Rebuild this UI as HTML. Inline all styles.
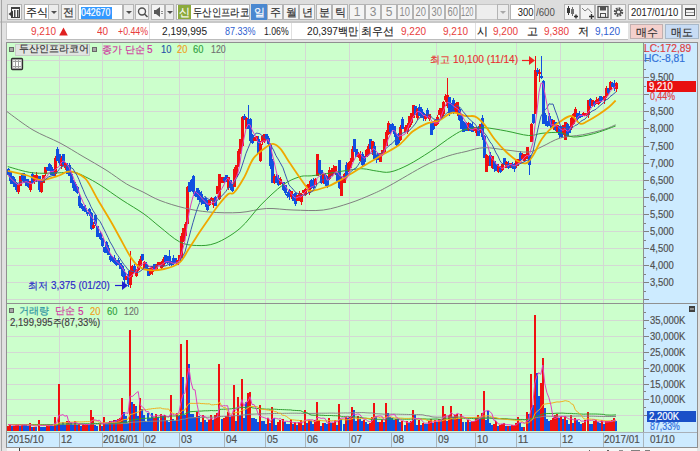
<!DOCTYPE html>
<html><head><meta charset="utf-8">
<style>
*{margin:0;padding:0;box-sizing:border-box}
html,body{width:700px;height:451px;overflow:hidden;background:#e0e0e0;font-family:"Liberation Sans",sans-serif;font-size:11px;color:#202020}
.a{position:absolute}
.btn{position:absolute;top:4px;height:16px;background:#f4f4f4;border:1px solid #b4b4b4;text-align:center;line-height:14px;font-size:11px;color:#303030}
.dd{position:absolute;top:4px;height:16px;background:#ececec;border:1px solid #b4b4b4}
.dis:after{border-top-color:#a8a8a8 !important}
.dd:after{content:"";position:absolute;left:50%;top:6px;margin-left:-3px;border-left:3px solid transparent;border-right:3px solid transparent;border-top:3px solid #505050}
.inp{position:absolute;top:4px;height:16px;background:#fff;border:1px solid #b4b4b4;line-height:14px;font-size:11px}
.num{color:#8c8c8c;font-size:12px;line-height:15px}
.sx{display:inline-block;transform:scaleX(0.91);transform-origin:0 0}
.k{font-size:10.5px;-webkit-text-stroke:0.15px currentColor}
.info{position:absolute;top:23px;height:16px;line-height:16px;font-size:11px;white-space:nowrap}
.r{color:#e83c3c}
.b{color:#3060d0}
.lg{position:absolute;line-height:12px;font-size:11px;white-space:nowrap;-webkit-text-stroke:0.15px currentColor}
.yl{position:absolute;left:650px;height:12px;line-height:12px;font-size:11px;color:#505050;-webkit-text-stroke:0.2px #505050}
.xl{position:absolute;top:432px;height:14px;line-height:14px;font-size:11px;color:#505050;-webkit-text-stroke:0.2px #505050}
.xl span{display:inline-block;transform:scaleX(0.9);transform-origin:0 0}
.xs{position:absolute;top:433px;width:1px;height:14px;background:#a8b4bc}
</style></head><body>
<!-- toolbar -->
<div class="a" style="left:0;top:0;width:700px;height:21px;background:#dddddd"></div>
<div class="a" style="left:0;top:21px;width:700px;height:2px;background:#c8c8c8"></div>
<div class="a" style="left:0;top:23px;width:700px;height:19px;background:#e2e2e2"></div>
<div class="a" style="left:1px;top:0;width:1px;height:451px;background:#a4a4a4"></div>
<div class="btn" style="left:7px;width:15px"><svg width="13" height="14" style="position:absolute;left:0;top:0"><rect x="3.5" y="2.5" width="8" height="10" fill="#fafafa" stroke="#404040"/><rect x="3" y="2" width="9" height="2" fill="#404040"/><rect x="6" y="5" width="1.5" height="7" fill="#484848"/><rect x="9" y="5" width="1.5" height="7" fill="#484848"/><path d="M0.5 9 L5 5.5 L5 12.5 Z" fill="#383838"/></svg></div>
<div class="inp" style="left:24px;width:25px;text-align:center"><span class="k">주식</span></div>
<div class="dd" style="left:48px;width:11px"></div>
<div class="btn" style="left:61px;width:15px"><span class="k">전</span></div>
<div class="inp" style="left:78px;width:45px"><span style="position:absolute;left:2px;top:2px;height:12px;width:31px;background:#3399ff"></span><span class="sx" style="position:absolute;left:2px;top:1px;color:#fff;transform:scaleX(0.8);font-size:11px;line-height:13px;-webkit-text-stroke:0.2px #fff">042670</span></div>
<div class="dd" style="left:123px;width:11px"></div>
<div class="btn" style="left:135px;width:14px"><svg width="13" height="14" style="position:absolute;left:0;top:0"><circle cx="6" cy="6.5" r="3.5" fill="none" stroke="#505050" stroke-width="1.4"/><line x1="8.5" y1="9" x2="11.5" y2="12" stroke="#505050" stroke-width="1.6"/></svg></div>
<div class="btn" style="left:151px;width:14px"><svg width="12" height="14" style="position:absolute;left:0;top:0"><path d="M2 5 L4 5 L8 2 L8 12 L4 9 L2 9 Z" fill="#585858"/><line x1="9" y1="6.5" x2="11" y2="6.5" stroke="#909090"/><line x1="9" y1="8.5" x2="11" y2="8.5" stroke="#909090"/></svg></div>
<div class="dd" style="left:165px;width:9px"></div>
<div class="inp" style="left:176px;width:74px;overflow:hidden"><span style="position:absolute;left:1px;top:0;width:13px;height:14px;background:#8caa3c;color:#fff;text-align:center" class="k">신</span><span class="k" style="position:absolute;left:16px;top:0;white-space:nowrap;font-size:11px;display:inline-block;transform:scaleX(0.85);transform-origin:0 0">두산인프라코</span></div>
<div class="btn" style="left:251px;width:16px;background:#4a88d0;color:#fff;border-color:#4a88d0"><span class="k">일</span></div>
<div class="btn" style="left:267px;width:16px"><span class="k">주</span></div>
<div class="btn" style="left:283px;width:16px"><span class="k">월</span></div>
<div class="btn" style="left:299px;width:16px"><span class="k">년</span></div>
<div class="btn" style="left:316px;width:16px"><span class="k">분</span></div>
<div class="btn" style="left:332px;width:16px"><span class="k">틱</span></div>
<div class="btn num" style="left:349px;width:16px">1</div>
<div class="btn num" style="left:365px;width:16px">3</div>
<div class="btn num" style="left:381px;width:16px">5</div>
<div class="btn num" style="left:397px;width:16px"><span class="sx" style="transform:scaleX(0.78);transform-origin:50% 0">10</span></div>
<div class="btn num" style="left:413px;width:16px"><span class="sx" style="transform:scaleX(0.78);transform-origin:50% 0">20</span></div>
<div class="btn num" style="left:429px;width:16px"><span class="sx" style="transform:scaleX(0.78);transform-origin:50% 0">30</span></div>
<div class="btn num" style="left:445px;width:15px"><span class="sx" style="transform:scaleX(0.78);transform-origin:50% 0">60</span></div>
<div class="btn num" style="left:460px;width:16px;text-align:left;overflow:hidden"><span class="sx" style="transform:scaleX(0.62);margin-left:0px">120</span></div>
<div class="a" style="left:476px;top:4px;width:33px;height:16px;background:#eeeeee;border:1px solid #c4c4c4"></div>
<div class="dd dis" style="left:497px;width:12px;background:#ececec"></div>
<div class="inp" style="left:510px;width:25px;text-align:right"><span class="sx" style="transform:scaleX(0.85);transform-origin:100% 0;margin-right:1px">300</span></div>
<div class="a" style="left:536px;top:4px;line-height:16px;color:#505050"><span class="sx" style="transform:scaleX(0.88)">/600</span></div>
<div class="btn" style="left:564px;width:16px"><svg width="14" height="14" style="position:absolute;left:0;top:0"><rect x="2" y="3" width="3" height="5" fill="#383838"/><line x1="3.5" y1="1" x2="3.5" y2="10" stroke="#383838"/><rect x="6" y="4" width="3" height="5" fill="#707070"/><line x1="7.5" y1="2" x2="7.5" y2="11" stroke="#707070"/><path d="M9 11.5 h4 M11 9.5 v4" stroke="#303030" stroke-width="1.4"/></svg></div>
<div class="btn" style="left:580px;width:15px"><svg width="14" height="14" style="position:absolute;left:0;top:0"><path d="M1 3 L4 6 L7 3.5 L11 8" fill="none" stroke="#808080"/><path d="M8 11.5 h5 M10.5 9 v5" stroke="#303030" stroke-width="1.4"/></svg></div>
<div class="btn" style="left:595px;width:16px"><svg width="14" height="14" style="position:absolute;left:0;top:0"><rect x="2" y="1.5" width="10" height="11" fill="none" stroke="#505050" stroke-width="1.3"/><rect x="4" y="2" width="6" height="3.5" fill="#505050"/><rect x="4.5" y="8.5" width="5" height="4" fill="none" stroke="#505050"/></svg></div>
<div class="btn" style="left:611px;width:15px"><svg width="13" height="14" style="position:absolute;left:0;top:0"><circle cx="6.5" cy="7" r="3.5" fill="none" stroke="#505050" stroke-width="2.4" stroke-dasharray="1.7 1.0"/><circle cx="6.5" cy="7" r="2.2" fill="none" stroke="#505050" stroke-width="1.2"/></svg></div>
<div class="inp" style="left:628px;width:54px;padding-left:2px"><span class="sx" style="transform:scaleX(0.86)">2017/01/10</span></div>
<div class="btn" style="left:682px;width:15px"><svg width="13" height="14" style="position:absolute;left:0;top:0"><rect x="2.5" y="3.5" width="9" height="7" fill="none" stroke="#505050"/><rect x="2" y="3" width="10" height="2" fill="#505050"/><line x1="3" y1="7.5" x2="11" y2="7.5" stroke="#a0a0a0"/></svg></div>

<!-- info bar -->
<div class="a" style="left:6px;top:23px;width:622px;height:17px;background:#fff;border-left:1px solid #c8c8c8;border-bottom:1px solid #bcbcbc"></div>
<div class="a" style="left:149px;top:23px;width:1px;height:16px;background:#e0e0e0"></div>
<div class="a" style="left:291px;top:23px;width:1px;height:16px;background:#e0e0e0"></div>
<div class="a" style="left:359px;top:23px;width:1px;height:16px;background:#e0e0e0"></div>
<div class="a" style="left:475px;top:23px;width:1px;height:16px;background:#e0e0e0"></div>
<div class="info r" style="left:31px"><span class="sx">9,210</span></div>
<svg class="a" style="left:59px;top:27px" width="9" height="9"><path d="M4.5 0.5 L8.8 8.5 L0.2 8.5 Z" fill="#e02020"/></svg>
<div class="info r" style="left:97px"><span class="sx">40</span></div>
<div class="info r" style="left:118px"><span class="sx" style="transform:scaleX(0.8)">+0.44%</span></div>
<div class="info" style="left:162px"><span class="sx" style="transform:scaleX(0.92)">2,199,995</span></div>
<div class="info b" style="left:225px"><span class="sx" style="transform:scaleX(0.82)">87.33%</span></div>
<div class="info" style="left:264px"><span class="sx" style="transform:scaleX(0.79)">1.06%</span></div>
<div class="info" style="left:307px"><span class="sx" style="transform:scaleX(0.92)">20,397<span class="k">백만</span></span></div>
<div class="info" style="left:361px"><span class="k">최우선</span></div>
<div class="info r" style="left:401px"><span class="sx">9,220</span></div>
<div class="info r" style="left:443px"><span class="sx">9,210</span></div>
<div class="info" style="left:477px"><span class="k">시</span></div>
<div class="info r" style="left:493px"><span class="sx">9,200</span></div>
<div class="info" style="left:527px"><span class="k">고</span></div>
<div class="info r" style="left:544px"><span class="sx">9,380</span></div>
<div class="info" style="left:578px"><span class="k">저</span></div>
<div class="info b" style="left:595px"><span class="sx">9,120</span></div>
<div class="a" style="left:630px;top:24px;width:33px;height:15px;background:#f4d0cc;border:1px solid #c0b0b0;text-align:center;line-height:14px;color:#303030"><span class="k">매수</span></div>
<div class="a" style="left:665px;top:24px;width:34px;height:15px;background:#c8dcf4;border:1px solid #a8b8c8;text-align:center;line-height:14px;color:#303030"><span class="k">매도</span></div>

<!-- chart frame -->
<div class="a" style="left:6px;top:42px;width:692px;height:406px;background:#909090"></div>
<div class="a" style="left:7px;top:43px;width:637px;height:389px;background:#ccffcc"></div>
<div class="a" style="left:644px;top:43px;width:53px;height:389px;background:#cdebff"></div>
<div class="a" style="left:7px;top:433px;width:690px;height:14px;background:#cdebff"></div>

<svg class="a" style="left:0;top:0" width="700" height="451" viewBox="0 0 700 451">
<g shape-rendering="crispEdges">
<line x1="59.5" y1="43" x2="59.5" y2="431" stroke="#d4d8d4" stroke-width="1"/>
<line x1="102.5" y1="43" x2="102.5" y2="431" stroke="#d4d8d4" stroke-width="1"/>
<line x1="143.5" y1="43" x2="143.5" y2="431" stroke="#d4d8d4" stroke-width="1"/>
<line x1="179.5" y1="43" x2="179.5" y2="431" stroke="#d4d8d4" stroke-width="1"/>
<line x1="224.5" y1="43" x2="224.5" y2="431" stroke="#d4d8d4" stroke-width="1"/>
<line x1="265.5" y1="43" x2="265.5" y2="431" stroke="#d4d8d4" stroke-width="1"/>
<line x1="305.5" y1="43" x2="305.5" y2="431" stroke="#d4d8d4" stroke-width="1"/>
<line x1="349.5" y1="43" x2="349.5" y2="431" stroke="#d4d8d4" stroke-width="1"/>
<line x1="391.5" y1="43" x2="391.5" y2="431" stroke="#d4d8d4" stroke-width="1"/>
<line x1="436.5" y1="43" x2="436.5" y2="431" stroke="#d4d8d4" stroke-width="1"/>
<line x1="475.5" y1="43" x2="475.5" y2="431" stroke="#d4d8d4" stroke-width="1"/>
<line x1="516.5" y1="43" x2="516.5" y2="431" stroke="#d4d8d4" stroke-width="1"/>
<line x1="560.5" y1="43" x2="560.5" y2="431" stroke="#d4d8d4" stroke-width="1"/>
<line x1="603.5" y1="43" x2="603.5" y2="431" stroke="#d4d8d4" stroke-width="1"/>
<line x1="7" y1="60.5" x2="643" y2="60.5" stroke="#d4d8d4" stroke-width="1"/>
<line x1="7" y1="77.5" x2="643" y2="77.5" stroke="#d4d8d4" stroke-width="1"/>
<line x1="7" y1="94.5" x2="643" y2="94.5" stroke="#d4d8d4" stroke-width="1"/>
<line x1="7" y1="111.5" x2="643" y2="111.5" stroke="#d4d8d4" stroke-width="1"/>
<line x1="7" y1="128.5" x2="643" y2="128.5" stroke="#d4d8d4" stroke-width="1"/>
<line x1="7" y1="146.5" x2="643" y2="146.5" stroke="#d4d8d4" stroke-width="1"/>
<line x1="7" y1="163.5" x2="643" y2="163.5" stroke="#d4d8d4" stroke-width="1"/>
<line x1="7" y1="180.5" x2="643" y2="180.5" stroke="#d4d8d4" stroke-width="1"/>
<line x1="7" y1="197.5" x2="643" y2="197.5" stroke="#d4d8d4" stroke-width="1"/>
<line x1="7" y1="214.5" x2="643" y2="214.5" stroke="#d4d8d4" stroke-width="1"/>
<line x1="7" y1="231.5" x2="643" y2="231.5" stroke="#d4d8d4" stroke-width="1"/>
<line x1="7" y1="248.5" x2="643" y2="248.5" stroke="#d4d8d4" stroke-width="1"/>
<line x1="7" y1="265.5" x2="643" y2="265.5" stroke="#d4d8d4" stroke-width="1"/>
<line x1="7" y1="282.5" x2="643" y2="282.5" stroke="#d4d8d4" stroke-width="1"/>
<line x1="7" y1="299.5" x2="643" y2="299.5" stroke="#d4d8d4" stroke-width="1"/>
<line x1="7" y1="320.5" x2="643" y2="320.5" stroke="#d4d8d4" stroke-width="1"/>
<line x1="7" y1="336.5" x2="643" y2="336.5" stroke="#d4d8d4" stroke-width="1"/>
<line x1="7" y1="352.5" x2="643" y2="352.5" stroke="#d4d8d4" stroke-width="1"/>
<line x1="7" y1="368.5" x2="643" y2="368.5" stroke="#d4d8d4" stroke-width="1"/>
<line x1="7" y1="384.5" x2="643" y2="384.5" stroke="#d4d8d4" stroke-width="1"/>
<line x1="7" y1="399.5" x2="643" y2="399.5" stroke="#d4d8d4" stroke-width="1"/>
<line x1="7" y1="415.5" x2="643" y2="415.5" stroke="#d4d8d4" stroke-width="1"/>
</g>
<g shape-rendering="crispEdges">
<rect x="8" y="168" width="1" height="7" fill="#1050e0"/>
<rect x="7" y="169" width="3" height="6" fill="#1050e0"/>
<rect x="10" y="171" width="1" height="13" fill="#1050e0"/>
<rect x="9" y="172" width="3" height="9" fill="#1050e0"/>
<rect x="12" y="176" width="1" height="8" fill="#1050e0"/>
<rect x="11" y="176" width="3" height="8" fill="#1050e0"/>
<rect x="14" y="177" width="1" height="10" fill="#1050e0"/>
<rect x="13" y="179" width="3" height="8" fill="#1050e0"/>
<rect x="16" y="182" width="1" height="10" fill="#1050e0"/>
<rect x="15" y="183" width="3" height="7" fill="#1050e0"/>
<rect x="18" y="184" width="1" height="10" fill="#f01010"/>
<rect x="17" y="184" width="3" height="8" fill="#f01010"/>
<rect x="20" y="176" width="1" height="10" fill="#f01010"/>
<rect x="19" y="176" width="3" height="10" fill="#f01010"/>
<rect x="22" y="173" width="1" height="8" fill="#1050e0"/>
<rect x="21" y="173" width="3" height="7" fill="#1050e0"/>
<rect x="24" y="173" width="1" height="10" fill="#1050e0"/>
<rect x="23" y="174" width="3" height="9" fill="#1050e0"/>
<rect x="26" y="179" width="1" height="7" fill="#1050e0"/>
<rect x="25" y="179" width="3" height="7" fill="#1050e0"/>
<rect x="28" y="179" width="1" height="9" fill="#1050e0"/>
<rect x="27" y="181" width="3" height="6" fill="#1050e0"/>
<rect x="30" y="181" width="1" height="11" fill="#f01010"/>
<rect x="29" y="181" width="3" height="9" fill="#f01010"/>
<rect x="32" y="172" width="1" height="11" fill="#1050e0"/>
<rect x="31" y="174" width="3" height="9" fill="#1050e0"/>
<rect x="34" y="175" width="1" height="9" fill="#f01010"/>
<rect x="33" y="175" width="3" height="6" fill="#f01010"/>
<rect x="36" y="172" width="1" height="10" fill="#f01010"/>
<rect x="35" y="175" width="3" height="5" fill="#f01010"/>
<rect x="39" y="176" width="1" height="16" fill="#1050e0"/>
<rect x="38" y="176" width="3" height="14" fill="#1050e0"/>
<rect x="41" y="179" width="1" height="14" fill="#f01010"/>
<rect x="40" y="181" width="3" height="11" fill="#f01010"/>
<rect x="43" y="175" width="1" height="8" fill="#f01010"/>
<rect x="42" y="175" width="3" height="8" fill="#f01010"/>
<rect x="45" y="167" width="1" height="9" fill="#f01010"/>
<rect x="44" y="167" width="3" height="7" fill="#f01010"/>
<rect x="47" y="167" width="1" height="4" fill="#1050e0"/>
<rect x="46" y="167" width="3" height="3" fill="#1050e0"/>
<rect x="49" y="163" width="1" height="8" fill="#1050e0"/>
<rect x="48" y="164" width="3" height="7" fill="#1050e0"/>
<rect x="51" y="165" width="1" height="10" fill="#1050e0"/>
<rect x="50" y="167" width="3" height="8" fill="#1050e0"/>
<rect x="53" y="169" width="1" height="7" fill="#1050e0"/>
<rect x="52" y="171" width="3" height="5" fill="#1050e0"/>
<rect x="55" y="156" width="1" height="21" fill="#f01010"/>
<rect x="54" y="158" width="3" height="16" fill="#f01010"/>
<rect x="57" y="147" width="1" height="14" fill="#1050e0"/>
<rect x="56" y="149" width="3" height="12" fill="#1050e0"/>
<rect x="59" y="154" width="1" height="11" fill="#1050e0"/>
<rect x="58" y="154" width="3" height="9" fill="#1050e0"/>
<rect x="61" y="156" width="1" height="13" fill="#f01010"/>
<rect x="60" y="158" width="3" height="8" fill="#f01010"/>
<rect x="63" y="154" width="1" height="12" fill="#1050e0"/>
<rect x="62" y="154" width="3" height="11" fill="#1050e0"/>
<rect x="65" y="163" width="1" height="7" fill="#f01010"/>
<rect x="64" y="163" width="3" height="5" fill="#f01010"/>
<rect x="67" y="163" width="1" height="11" fill="#1050e0"/>
<rect x="66" y="166" width="3" height="8" fill="#1050e0"/>
<rect x="69" y="163" width="1" height="13" fill="#1050e0"/>
<rect x="68" y="165" width="3" height="11" fill="#1050e0"/>
<rect x="71" y="172" width="1" height="11" fill="#1050e0"/>
<rect x="70" y="174" width="3" height="9" fill="#1050e0"/>
<rect x="73" y="180" width="1" height="11" fill="#1050e0"/>
<rect x="72" y="181" width="3" height="7" fill="#1050e0"/>
<rect x="75" y="182" width="1" height="10" fill="#1050e0"/>
<rect x="74" y="184" width="3" height="7" fill="#1050e0"/>
<rect x="77" y="186" width="1" height="8" fill="#1050e0"/>
<rect x="76" y="187" width="3" height="6" fill="#1050e0"/>
<rect x="79" y="194" width="1" height="14" fill="#1050e0"/>
<rect x="78" y="196" width="3" height="10" fill="#1050e0"/>
<rect x="81" y="203" width="1" height="6" fill="#1050e0"/>
<rect x="80" y="204" width="3" height="4" fill="#1050e0"/>
<rect x="83" y="206" width="1" height="5" fill="#1050e0"/>
<rect x="82" y="206" width="3" height="5" fill="#1050e0"/>
<rect x="85" y="205" width="1" height="7" fill="#1050e0"/>
<rect x="84" y="208" width="3" height="4" fill="#1050e0"/>
<rect x="87" y="212" width="1" height="4" fill="#1050e0"/>
<rect x="86" y="212" width="3" height="2" fill="#1050e0"/>
<rect x="89" y="208" width="1" height="8" fill="#1050e0"/>
<rect x="88" y="209" width="3" height="5" fill="#1050e0"/>
<rect x="91" y="212" width="1" height="18" fill="#1050e0"/>
<rect x="90" y="213" width="3" height="16" fill="#1050e0"/>
<rect x="93" y="222" width="1" height="7" fill="#f01010"/>
<rect x="92" y="225" width="3" height="3" fill="#f01010"/>
<rect x="95" y="214" width="1" height="12" fill="#1050e0"/>
<rect x="94" y="215" width="3" height="9" fill="#1050e0"/>
<rect x="97" y="226" width="1" height="11" fill="#1050e0"/>
<rect x="96" y="226" width="3" height="11" fill="#1050e0"/>
<rect x="100" y="231" width="1" height="9" fill="#1050e0"/>
<rect x="99" y="233" width="3" height="6" fill="#1050e0"/>
<rect x="102" y="238" width="1" height="9" fill="#1050e0"/>
<rect x="101" y="238" width="3" height="8" fill="#1050e0"/>
<rect x="104" y="247" width="1" height="6" fill="#1050e0"/>
<rect x="103" y="247" width="3" height="5" fill="#1050e0"/>
<rect x="106" y="241" width="1" height="12" fill="#1050e0"/>
<rect x="105" y="242" width="3" height="11" fill="#1050e0"/>
<rect x="108" y="245" width="1" height="10" fill="#1050e0"/>
<rect x="107" y="248" width="3" height="7" fill="#1050e0"/>
<rect x="110" y="254" width="1" height="8" fill="#1050e0"/>
<rect x="109" y="256" width="3" height="4" fill="#1050e0"/>
<rect x="112" y="256" width="1" height="6" fill="#1050e0"/>
<rect x="111" y="257" width="3" height="4" fill="#1050e0"/>
<rect x="114" y="255" width="1" height="9" fill="#1050e0"/>
<rect x="113" y="258" width="3" height="5" fill="#1050e0"/>
<rect x="116" y="260" width="1" height="6" fill="#1050e0"/>
<rect x="115" y="262" width="3" height="3" fill="#1050e0"/>
<rect x="118" y="258" width="1" height="7" fill="#1050e0"/>
<rect x="117" y="260" width="3" height="4" fill="#1050e0"/>
<rect x="120" y="263" width="1" height="6" fill="#1050e0"/>
<rect x="119" y="263" width="3" height="6" fill="#1050e0"/>
<rect x="122" y="265" width="1" height="12" fill="#1050e0"/>
<rect x="121" y="266" width="3" height="10" fill="#1050e0"/>
<rect x="124" y="269" width="1" height="14" fill="#1050e0"/>
<rect x="123" y="272" width="3" height="8" fill="#1050e0"/>
<rect x="126" y="276" width="1" height="4" fill="#f01010"/>
<rect x="125" y="276" width="3" height="4" fill="#f01010"/>
<rect x="128" y="271" width="1" height="16" fill="#1050e0"/>
<rect x="127" y="274" width="3" height="10" fill="#1050e0"/>
<rect x="130" y="251" width="1" height="37" fill="#f01010"/>
<rect x="129" y="270" width="3" height="15" fill="#f01010"/>
<rect x="132" y="265" width="1" height="12" fill="#f01010"/>
<rect x="131" y="266" width="3" height="8" fill="#f01010"/>
<rect x="134" y="264" width="1" height="8" fill="#1050e0"/>
<rect x="133" y="266" width="3" height="4" fill="#1050e0"/>
<rect x="136" y="269" width="1" height="8" fill="#f01010"/>
<rect x="135" y="270" width="3" height="6" fill="#f01010"/>
<rect x="138" y="261" width="1" height="10" fill="#f01010"/>
<rect x="137" y="264" width="3" height="6" fill="#f01010"/>
<rect x="140" y="256" width="1" height="11" fill="#f01010"/>
<rect x="139" y="259" width="3" height="7" fill="#f01010"/>
<rect x="142" y="254" width="1" height="7" fill="#1050e0"/>
<rect x="141" y="254" width="3" height="6" fill="#1050e0"/>
<rect x="144" y="261" width="1" height="7" fill="#f01010"/>
<rect x="143" y="262" width="3" height="6" fill="#f01010"/>
<rect x="146" y="262" width="1" height="7" fill="#1050e0"/>
<rect x="145" y="264" width="3" height="5" fill="#1050e0"/>
<rect x="148" y="268" width="1" height="8" fill="#1050e0"/>
<rect x="147" y="269" width="3" height="7" fill="#1050e0"/>
<rect x="150" y="268" width="1" height="7" fill="#f01010"/>
<rect x="149" y="268" width="3" height="6" fill="#f01010"/>
<rect x="152" y="266" width="1" height="9" fill="#f01010"/>
<rect x="151" y="266" width="3" height="6" fill="#f01010"/>
<rect x="154" y="264" width="1" height="7" fill="#1050e0"/>
<rect x="153" y="264" width="3" height="6" fill="#1050e0"/>
<rect x="156" y="264" width="1" height="7" fill="#f01010"/>
<rect x="155" y="265" width="3" height="5" fill="#f01010"/>
<rect x="158" y="262" width="1" height="3" fill="#f01010"/>
<rect x="157" y="262" width="3" height="3" fill="#f01010"/>
<rect x="161" y="261" width="1" height="8" fill="#f01010"/>
<rect x="160" y="262" width="3" height="6" fill="#f01010"/>
<rect x="163" y="257" width="1" height="10" fill="#f01010"/>
<rect x="162" y="259" width="3" height="7" fill="#f01010"/>
<rect x="165" y="255" width="1" height="9" fill="#1050e0"/>
<rect x="164" y="255" width="3" height="8" fill="#1050e0"/>
<rect x="167" y="256" width="1" height="8" fill="#1050e0"/>
<rect x="166" y="258" width="3" height="5" fill="#1050e0"/>
<rect x="169" y="250" width="1" height="16" fill="#1050e0"/>
<rect x="168" y="256" width="3" height="7" fill="#1050e0"/>
<rect x="171" y="261" width="1" height="5" fill="#1050e0"/>
<rect x="170" y="262" width="3" height="3" fill="#1050e0"/>
<rect x="173" y="255" width="1" height="10" fill="#1050e0"/>
<rect x="172" y="258" width="3" height="6" fill="#1050e0"/>
<rect x="175" y="258" width="1" height="5" fill="#1050e0"/>
<rect x="174" y="258" width="3" height="5" fill="#1050e0"/>
<rect x="177" y="260" width="1" height="5" fill="#f01010"/>
<rect x="176" y="260" width="3" height="5" fill="#f01010"/>
<rect x="179" y="255" width="1" height="6" fill="#f01010"/>
<rect x="178" y="255" width="3" height="6" fill="#f01010"/>
<rect x="181" y="233" width="1" height="25" fill="#f01010"/>
<rect x="180" y="236" width="3" height="22" fill="#f01010"/>
<rect x="183" y="228" width="1" height="14" fill="#f01010"/>
<rect x="182" y="228" width="3" height="13" fill="#f01010"/>
<rect x="185" y="222" width="1" height="14" fill="#f01010"/>
<rect x="184" y="224" width="3" height="12" fill="#f01010"/>
<rect x="187" y="186" width="1" height="38" fill="#f01010"/>
<rect x="186" y="187" width="3" height="37" fill="#f01010"/>
<rect x="189" y="182" width="1" height="10" fill="#1050e0"/>
<rect x="188" y="182" width="3" height="10" fill="#1050e0"/>
<rect x="191" y="179" width="1" height="12" fill="#1050e0"/>
<rect x="190" y="180" width="3" height="9" fill="#1050e0"/>
<rect x="193" y="175" width="1" height="19" fill="#1050e0"/>
<rect x="192" y="176" width="3" height="16" fill="#1050e0"/>
<rect x="195" y="191" width="1" height="6" fill="#1050e0"/>
<rect x="194" y="193" width="3" height="3" fill="#1050e0"/>
<rect x="197" y="188" width="1" height="12" fill="#1050e0"/>
<rect x="196" y="188" width="3" height="9" fill="#1050e0"/>
<rect x="199" y="190" width="1" height="12" fill="#1050e0"/>
<rect x="198" y="192" width="3" height="8" fill="#1050e0"/>
<rect x="201" y="191" width="1" height="14" fill="#1050e0"/>
<rect x="200" y="194" width="3" height="8" fill="#1050e0"/>
<rect x="203" y="198" width="1" height="6" fill="#1050e0"/>
<rect x="202" y="201" width="3" height="3" fill="#1050e0"/>
<rect x="205" y="197" width="1" height="10" fill="#1050e0"/>
<rect x="204" y="198" width="3" height="6" fill="#1050e0"/>
<rect x="207" y="200" width="1" height="11" fill="#1050e0"/>
<rect x="206" y="202" width="3" height="8" fill="#1050e0"/>
<rect x="209" y="199" width="1" height="7" fill="#f01010"/>
<rect x="208" y="200" width="3" height="5" fill="#f01010"/>
<rect x="211" y="197" width="1" height="4" fill="#f01010"/>
<rect x="210" y="198" width="3" height="3" fill="#f01010"/>
<rect x="213" y="198" width="1" height="10" fill="#f01010"/>
<rect x="212" y="199" width="3" height="6" fill="#f01010"/>
<rect x="215" y="196" width="1" height="10" fill="#1050e0"/>
<rect x="214" y="197" width="3" height="9" fill="#1050e0"/>
<rect x="217" y="186" width="1" height="8" fill="#f01010"/>
<rect x="216" y="186" width="3" height="8" fill="#f01010"/>
<rect x="219" y="174" width="1" height="26" fill="#f01010"/>
<rect x="218" y="174" width="3" height="25" fill="#f01010"/>
<rect x="222" y="177" width="1" height="6" fill="#f01010"/>
<rect x="221" y="177" width="3" height="6" fill="#f01010"/>
<rect x="224" y="177" width="1" height="6" fill="#1050e0"/>
<rect x="223" y="178" width="3" height="3" fill="#1050e0"/>
<rect x="226" y="175" width="1" height="7" fill="#1050e0"/>
<rect x="225" y="175" width="3" height="7" fill="#1050e0"/>
<rect x="228" y="177" width="1" height="13" fill="#f01010"/>
<rect x="227" y="177" width="3" height="11" fill="#f01010"/>
<rect x="230" y="180" width="1" height="10" fill="#1050e0"/>
<rect x="229" y="180" width="3" height="8" fill="#1050e0"/>
<rect x="232" y="184" width="1" height="8" fill="#1050e0"/>
<rect x="231" y="184" width="3" height="7" fill="#1050e0"/>
<rect x="234" y="167" width="1" height="20" fill="#f01010"/>
<rect x="233" y="169" width="3" height="18" fill="#f01010"/>
<rect x="236" y="165" width="1" height="12" fill="#f01010"/>
<rect x="235" y="165" width="3" height="12" fill="#f01010"/>
<rect x="238" y="149" width="1" height="18" fill="#f01010"/>
<rect x="237" y="151" width="3" height="15" fill="#f01010"/>
<rect x="240" y="139" width="1" height="15" fill="#f01010"/>
<rect x="239" y="139" width="3" height="12" fill="#f01010"/>
<rect x="242" y="116" width="1" height="31" fill="#f01010"/>
<rect x="241" y="117" width="3" height="29" fill="#f01010"/>
<rect x="244" y="114" width="1" height="6" fill="#1050e0"/>
<rect x="243" y="116" width="3" height="3" fill="#1050e0"/>
<rect x="246" y="117" width="1" height="12" fill="#f01010"/>
<rect x="245" y="118" width="3" height="11" fill="#f01010"/>
<rect x="248" y="105" width="1" height="24" fill="#1050e0"/>
<rect x="247" y="119" width="3" height="10" fill="#1050e0"/>
<rect x="250" y="118" width="1" height="24" fill="#1050e0"/>
<rect x="249" y="119" width="3" height="22" fill="#1050e0"/>
<rect x="252" y="134" width="1" height="10" fill="#1050e0"/>
<rect x="251" y="135" width="3" height="8" fill="#1050e0"/>
<rect x="254" y="137" width="1" height="4" fill="#f01010"/>
<rect x="253" y="138" width="3" height="3" fill="#f01010"/>
<rect x="256" y="136" width="1" height="5" fill="#f01010"/>
<rect x="255" y="136" width="3" height="5" fill="#f01010"/>
<rect x="258" y="136" width="1" height="18" fill="#1050e0"/>
<rect x="257" y="139" width="3" height="15" fill="#1050e0"/>
<rect x="260" y="141" width="1" height="21" fill="#f01010"/>
<rect x="259" y="144" width="3" height="17" fill="#f01010"/>
<rect x="262" y="135" width="1" height="10" fill="#f01010"/>
<rect x="261" y="136" width="3" height="6" fill="#f01010"/>
<rect x="264" y="134" width="1" height="9" fill="#f01010"/>
<rect x="263" y="134" width="3" height="7" fill="#f01010"/>
<rect x="266" y="134" width="1" height="5" fill="#1050e0"/>
<rect x="265" y="134" width="3" height="5" fill="#1050e0"/>
<rect x="268" y="136" width="1" height="9" fill="#1050e0"/>
<rect x="267" y="138" width="3" height="6" fill="#1050e0"/>
<rect x="270" y="144" width="1" height="25" fill="#1050e0"/>
<rect x="269" y="144" width="3" height="22" fill="#1050e0"/>
<rect x="272" y="159" width="1" height="24" fill="#1050e0"/>
<rect x="271" y="161" width="3" height="22" fill="#1050e0"/>
<rect x="274" y="174" width="1" height="10" fill="#f01010"/>
<rect x="273" y="176" width="3" height="7" fill="#f01010"/>
<rect x="276" y="174" width="1" height="9" fill="#1050e0"/>
<rect x="275" y="177" width="3" height="6" fill="#1050e0"/>
<rect x="278" y="175" width="1" height="11" fill="#1050e0"/>
<rect x="277" y="178" width="3" height="7" fill="#1050e0"/>
<rect x="280" y="177" width="1" height="8" fill="#f01010"/>
<rect x="279" y="179" width="3" height="5" fill="#f01010"/>
<rect x="283" y="182" width="1" height="9" fill="#1050e0"/>
<rect x="282" y="182" width="3" height="8" fill="#1050e0"/>
<rect x="285" y="185" width="1" height="10" fill="#1050e0"/>
<rect x="284" y="185" width="3" height="8" fill="#1050e0"/>
<rect x="287" y="192" width="1" height="6" fill="#1050e0"/>
<rect x="286" y="194" width="3" height="2" fill="#1050e0"/>
<rect x="289" y="189" width="1" height="11" fill="#1050e0"/>
<rect x="288" y="190" width="3" height="7" fill="#1050e0"/>
<rect x="291" y="191" width="1" height="8" fill="#f01010"/>
<rect x="290" y="191" width="3" height="6" fill="#f01010"/>
<rect x="293" y="194" width="1" height="7" fill="#1050e0"/>
<rect x="292" y="194" width="3" height="7" fill="#1050e0"/>
<rect x="295" y="192" width="1" height="14" fill="#1050e0"/>
<rect x="294" y="193" width="3" height="11" fill="#1050e0"/>
<rect x="297" y="195" width="1" height="6" fill="#f01010"/>
<rect x="296" y="195" width="3" height="6" fill="#f01010"/>
<rect x="299" y="191" width="1" height="10" fill="#f01010"/>
<rect x="298" y="193" width="3" height="7" fill="#f01010"/>
<rect x="301" y="193" width="1" height="12" fill="#f01010"/>
<rect x="300" y="194" width="3" height="8" fill="#f01010"/>
<rect x="303" y="190" width="1" height="3" fill="#f01010"/>
<rect x="302" y="190" width="3" height="3" fill="#f01010"/>
<rect x="305" y="188" width="1" height="8" fill="#f01010"/>
<rect x="304" y="189" width="3" height="6" fill="#f01010"/>
<rect x="307" y="184" width="1" height="4" fill="#f01010"/>
<rect x="306" y="185" width="3" height="3" fill="#f01010"/>
<rect x="309" y="181" width="1" height="14" fill="#f01010"/>
<rect x="308" y="184" width="3" height="9" fill="#f01010"/>
<rect x="311" y="179" width="1" height="10" fill="#1050e0"/>
<rect x="310" y="180" width="3" height="8" fill="#1050e0"/>
<rect x="313" y="178" width="1" height="11" fill="#1050e0"/>
<rect x="312" y="181" width="3" height="7" fill="#1050e0"/>
<rect x="315" y="178" width="1" height="7" fill="#f01010"/>
<rect x="314" y="179" width="3" height="6" fill="#f01010"/>
<rect x="317" y="154" width="1" height="22" fill="#f01010"/>
<rect x="316" y="154" width="3" height="22" fill="#f01010"/>
<rect x="319" y="160" width="1" height="14" fill="#1050e0"/>
<rect x="318" y="160" width="3" height="13" fill="#1050e0"/>
<rect x="321" y="170" width="1" height="14" fill="#1050e0"/>
<rect x="320" y="170" width="3" height="13" fill="#1050e0"/>
<rect x="323" y="174" width="1" height="10" fill="#f01010"/>
<rect x="322" y="174" width="3" height="9" fill="#f01010"/>
<rect x="325" y="173" width="1" height="13" fill="#1050e0"/>
<rect x="324" y="175" width="3" height="9" fill="#1050e0"/>
<rect x="327" y="176" width="1" height="12" fill="#1050e0"/>
<rect x="326" y="176" width="3" height="10" fill="#1050e0"/>
<rect x="329" y="167" width="1" height="13" fill="#f01010"/>
<rect x="328" y="170" width="3" height="9" fill="#f01010"/>
<rect x="331" y="168" width="1" height="8" fill="#f01010"/>
<rect x="330" y="171" width="3" height="5" fill="#f01010"/>
<rect x="333" y="165" width="1" height="9" fill="#f01010"/>
<rect x="332" y="168" width="3" height="6" fill="#f01010"/>
<rect x="335" y="166" width="1" height="9" fill="#f01010"/>
<rect x="334" y="166" width="3" height="6" fill="#f01010"/>
<rect x="337" y="173" width="1" height="9" fill="#1050e0"/>
<rect x="336" y="173" width="3" height="8" fill="#1050e0"/>
<rect x="339" y="160" width="1" height="29" fill="#1050e0"/>
<rect x="338" y="160" width="3" height="28" fill="#1050e0"/>
<rect x="341" y="176" width="1" height="20" fill="#f01010"/>
<rect x="340" y="179" width="3" height="17" fill="#f01010"/>
<rect x="344" y="173" width="1" height="10" fill="#f01010"/>
<rect x="343" y="174" width="3" height="9" fill="#f01010"/>
<rect x="346" y="162" width="1" height="16" fill="#1050e0"/>
<rect x="345" y="165" width="3" height="11" fill="#1050e0"/>
<rect x="348" y="162" width="1" height="10" fill="#f01010"/>
<rect x="347" y="163" width="3" height="8" fill="#f01010"/>
<rect x="350" y="158" width="1" height="10" fill="#f01010"/>
<rect x="349" y="161" width="3" height="7" fill="#f01010"/>
<rect x="352" y="146" width="1" height="16" fill="#f01010"/>
<rect x="351" y="149" width="3" height="13" fill="#f01010"/>
<rect x="354" y="139" width="1" height="13" fill="#1050e0"/>
<rect x="353" y="139" width="3" height="13" fill="#1050e0"/>
<rect x="356" y="149" width="1" height="8" fill="#1050e0"/>
<rect x="355" y="149" width="3" height="8" fill="#1050e0"/>
<rect x="358" y="152" width="1" height="6" fill="#f01010"/>
<rect x="357" y="154" width="3" height="3" fill="#f01010"/>
<rect x="360" y="151" width="1" height="10" fill="#f01010"/>
<rect x="359" y="154" width="3" height="7" fill="#f01010"/>
<rect x="362" y="152" width="1" height="15" fill="#1050e0"/>
<rect x="361" y="154" width="3" height="11" fill="#1050e0"/>
<rect x="364" y="156" width="1" height="9" fill="#1050e0"/>
<rect x="363" y="157" width="3" height="5" fill="#1050e0"/>
<rect x="366" y="149" width="1" height="8" fill="#f01010"/>
<rect x="365" y="150" width="3" height="7" fill="#f01010"/>
<rect x="368" y="144" width="1" height="12" fill="#f01010"/>
<rect x="367" y="146" width="3" height="8" fill="#f01010"/>
<rect x="370" y="139" width="1" height="10" fill="#1050e0"/>
<rect x="369" y="139" width="3" height="10" fill="#1050e0"/>
<rect x="372" y="141" width="1" height="14" fill="#f01010"/>
<rect x="371" y="141" width="3" height="11" fill="#f01010"/>
<rect x="374" y="142" width="1" height="17" fill="#1050e0"/>
<rect x="373" y="146" width="3" height="13" fill="#1050e0"/>
<rect x="376" y="155" width="1" height="8" fill="#1050e0"/>
<rect x="375" y="157" width="3" height="3" fill="#1050e0"/>
<rect x="378" y="153" width="1" height="7" fill="#1050e0"/>
<rect x="377" y="153" width="3" height="6" fill="#1050e0"/>
<rect x="380" y="153" width="1" height="9" fill="#f01010"/>
<rect x="379" y="153" width="3" height="9" fill="#f01010"/>
<rect x="382" y="150" width="1" height="6" fill="#f01010"/>
<rect x="381" y="150" width="3" height="5" fill="#f01010"/>
<rect x="384" y="139" width="1" height="14" fill="#f01010"/>
<rect x="383" y="139" width="3" height="13" fill="#f01010"/>
<rect x="386" y="130" width="1" height="16" fill="#f01010"/>
<rect x="385" y="132" width="3" height="14" fill="#f01010"/>
<rect x="388" y="121" width="1" height="14" fill="#f01010"/>
<rect x="387" y="123" width="3" height="11" fill="#f01010"/>
<rect x="390" y="124" width="1" height="10" fill="#1050e0"/>
<rect x="389" y="125" width="3" height="7" fill="#1050e0"/>
<rect x="392" y="123" width="1" height="7" fill="#1050e0"/>
<rect x="391" y="124" width="3" height="6" fill="#1050e0"/>
<rect x="394" y="126" width="1" height="11" fill="#1050e0"/>
<rect x="393" y="126" width="3" height="8" fill="#1050e0"/>
<rect x="396" y="133" width="1" height="13" fill="#1050e0"/>
<rect x="395" y="134" width="3" height="11" fill="#1050e0"/>
<rect x="398" y="133" width="1" height="12" fill="#1050e0"/>
<rect x="397" y="136" width="3" height="7" fill="#1050e0"/>
<rect x="400" y="125" width="1" height="16" fill="#f01010"/>
<rect x="399" y="127" width="3" height="13" fill="#f01010"/>
<rect x="402" y="117" width="1" height="12" fill="#1050e0"/>
<rect x="401" y="119" width="3" height="10" fill="#1050e0"/>
<rect x="405" y="125" width="1" height="7" fill="#f01010"/>
<rect x="404" y="127" width="3" height="5" fill="#f01010"/>
<rect x="407" y="123" width="1" height="11" fill="#f01010"/>
<rect x="406" y="125" width="3" height="7" fill="#f01010"/>
<rect x="409" y="116" width="1" height="12" fill="#f01010"/>
<rect x="408" y="116" width="3" height="11" fill="#f01010"/>
<rect x="411" y="113" width="1" height="12" fill="#f01010"/>
<rect x="410" y="113" width="3" height="10" fill="#f01010"/>
<rect x="413" y="105" width="1" height="13" fill="#f01010"/>
<rect x="412" y="105" width="3" height="13" fill="#f01010"/>
<rect x="415" y="106" width="1" height="9" fill="#1050e0"/>
<rect x="414" y="106" width="3" height="9" fill="#1050e0"/>
<rect x="417" y="108" width="1" height="12" fill="#f01010"/>
<rect x="416" y="109" width="3" height="9" fill="#f01010"/>
<rect x="419" y="104" width="1" height="12" fill="#1050e0"/>
<rect x="418" y="107" width="3" height="9" fill="#1050e0"/>
<rect x="421" y="107" width="1" height="11" fill="#1050e0"/>
<rect x="420" y="109" width="3" height="9" fill="#1050e0"/>
<rect x="423" y="112" width="1" height="9" fill="#1050e0"/>
<rect x="422" y="113" width="3" height="5" fill="#1050e0"/>
<rect x="425" y="114" width="1" height="7" fill="#f01010"/>
<rect x="424" y="116" width="3" height="3" fill="#f01010"/>
<rect x="427" y="108" width="1" height="10" fill="#1050e0"/>
<rect x="426" y="110" width="3" height="7" fill="#1050e0"/>
<rect x="429" y="114" width="1" height="7" fill="#f01010"/>
<rect x="428" y="114" width="3" height="5" fill="#f01010"/>
<rect x="431" y="123" width="1" height="12" fill="#1050e0"/>
<rect x="430" y="123" width="3" height="12" fill="#1050e0"/>
<rect x="433" y="122" width="1" height="8" fill="#1050e0"/>
<rect x="432" y="122" width="3" height="7" fill="#1050e0"/>
<rect x="435" y="120" width="1" height="6" fill="#f01010"/>
<rect x="434" y="120" width="3" height="6" fill="#f01010"/>
<rect x="437" y="115" width="1" height="10" fill="#f01010"/>
<rect x="436" y="117" width="3" height="7" fill="#f01010"/>
<rect x="439" y="108" width="1" height="7" fill="#f01010"/>
<rect x="438" y="110" width="3" height="5" fill="#f01010"/>
<rect x="441" y="108" width="1" height="12" fill="#f01010"/>
<rect x="440" y="108" width="3" height="11" fill="#f01010"/>
<rect x="443" y="101" width="1" height="15" fill="#f01010"/>
<rect x="442" y="102" width="3" height="12" fill="#f01010"/>
<rect x="445" y="94" width="1" height="8" fill="#f01010"/>
<rect x="444" y="96" width="3" height="4" fill="#f01010"/>
<rect x="447" y="78" width="1" height="30" fill="#f01010"/>
<rect x="446" y="95" width="3" height="11" fill="#f01010"/>
<rect x="449" y="97" width="1" height="19" fill="#1050e0"/>
<rect x="448" y="97" width="3" height="16" fill="#1050e0"/>
<rect x="451" y="103" width="1" height="11" fill="#1050e0"/>
<rect x="450" y="104" width="3" height="9" fill="#1050e0"/>
<rect x="453" y="98" width="1" height="16" fill="#1050e0"/>
<rect x="452" y="100" width="3" height="12" fill="#1050e0"/>
<rect x="455" y="103" width="1" height="9" fill="#f01010"/>
<rect x="454" y="104" width="3" height="6" fill="#f01010"/>
<rect x="457" y="102" width="1" height="14" fill="#f01010"/>
<rect x="456" y="102" width="3" height="11" fill="#f01010"/>
<rect x="459" y="107" width="1" height="14" fill="#1050e0"/>
<rect x="458" y="109" width="3" height="11" fill="#1050e0"/>
<rect x="461" y="114" width="1" height="15" fill="#1050e0"/>
<rect x="460" y="116" width="3" height="13" fill="#1050e0"/>
<rect x="463" y="121" width="1" height="11" fill="#1050e0"/>
<rect x="462" y="122" width="3" height="10" fill="#1050e0"/>
<rect x="466" y="122" width="1" height="9" fill="#1050e0"/>
<rect x="465" y="123" width="3" height="8" fill="#1050e0"/>
<rect x="468" y="122" width="1" height="9" fill="#f01010"/>
<rect x="467" y="123" width="3" height="7" fill="#f01010"/>
<rect x="470" y="123" width="1" height="8" fill="#1050e0"/>
<rect x="469" y="124" width="3" height="7" fill="#1050e0"/>
<rect x="472" y="122" width="1" height="10" fill="#1050e0"/>
<rect x="471" y="126" width="3" height="6" fill="#1050e0"/>
<rect x="474" y="127" width="1" height="4" fill="#f01010"/>
<rect x="473" y="128" width="3" height="3" fill="#f01010"/>
<rect x="476" y="127" width="1" height="9" fill="#f01010"/>
<rect x="475" y="127" width="3" height="6" fill="#f01010"/>
<rect x="478" y="126" width="1" height="10" fill="#1050e0"/>
<rect x="477" y="127" width="3" height="9" fill="#1050e0"/>
<rect x="480" y="124" width="1" height="9" fill="#f01010"/>
<rect x="479" y="124" width="3" height="6" fill="#f01010"/>
<rect x="482" y="115" width="1" height="25" fill="#1050e0"/>
<rect x="481" y="118" width="3" height="19" fill="#1050e0"/>
<rect x="484" y="135" width="1" height="23" fill="#1050e0"/>
<rect x="483" y="136" width="3" height="22" fill="#1050e0"/>
<rect x="486" y="154" width="1" height="18" fill="#f01010"/>
<rect x="485" y="155" width="3" height="17" fill="#f01010"/>
<rect x="488" y="156" width="1" height="10" fill="#f01010"/>
<rect x="487" y="156" width="3" height="10" fill="#f01010"/>
<rect x="490" y="152" width="1" height="14" fill="#1050e0"/>
<rect x="489" y="155" width="3" height="11" fill="#1050e0"/>
<rect x="492" y="156" width="1" height="13" fill="#f01010"/>
<rect x="491" y="156" width="3" height="12" fill="#f01010"/>
<rect x="494" y="161" width="1" height="11" fill="#1050e0"/>
<rect x="493" y="161" width="3" height="8" fill="#1050e0"/>
<rect x="496" y="164" width="1" height="7" fill="#1050e0"/>
<rect x="495" y="164" width="3" height="7" fill="#1050e0"/>
<rect x="498" y="164" width="1" height="9" fill="#f01010"/>
<rect x="497" y="166" width="3" height="6" fill="#f01010"/>
<rect x="500" y="166" width="1" height="7" fill="#1050e0"/>
<rect x="499" y="168" width="3" height="4" fill="#1050e0"/>
<rect x="502" y="163" width="1" height="8" fill="#f01010"/>
<rect x="501" y="164" width="3" height="6" fill="#f01010"/>
<rect x="504" y="158" width="1" height="7" fill="#1050e0"/>
<rect x="503" y="158" width="3" height="6" fill="#1050e0"/>
<rect x="506" y="161" width="1" height="7" fill="#f01010"/>
<rect x="505" y="162" width="3" height="6" fill="#f01010"/>
<rect x="508" y="161" width="1" height="8" fill="#1050e0"/>
<rect x="507" y="164" width="3" height="4" fill="#1050e0"/>
<rect x="510" y="163" width="1" height="5" fill="#f01010"/>
<rect x="509" y="163" width="3" height="3" fill="#f01010"/>
<rect x="512" y="162" width="1" height="7" fill="#1050e0"/>
<rect x="511" y="164" width="3" height="4" fill="#1050e0"/>
<rect x="514" y="163" width="1" height="9" fill="#1050e0"/>
<rect x="513" y="164" width="3" height="5" fill="#1050e0"/>
<rect x="516" y="159" width="1" height="9" fill="#f01010"/>
<rect x="515" y="159" width="3" height="7" fill="#f01010"/>
<rect x="518" y="159" width="1" height="7" fill="#f01010"/>
<rect x="517" y="160" width="3" height="4" fill="#f01010"/>
<rect x="520" y="151" width="1" height="10" fill="#1050e0"/>
<rect x="519" y="153" width="3" height="7" fill="#1050e0"/>
<rect x="522" y="153" width="1" height="6" fill="#f01010"/>
<rect x="521" y="155" width="3" height="4" fill="#f01010"/>
<rect x="524" y="154" width="1" height="7" fill="#f01010"/>
<rect x="523" y="154" width="3" height="7" fill="#f01010"/>
<rect x="527" y="147" width="1" height="12" fill="#f01010"/>
<rect x="526" y="147" width="3" height="12" fill="#f01010"/>
<rect x="529" y="154" width="1" height="21" fill="#1050e0"/>
<rect x="528" y="155" width="3" height="10" fill="#1050e0"/>
<rect x="531" y="123" width="1" height="19" fill="#f01010"/>
<rect x="530" y="124" width="3" height="18" fill="#f01010"/>
<rect x="533" y="114" width="1" height="10" fill="#1050e0"/>
<rect x="532" y="114" width="3" height="9" fill="#1050e0"/>
<rect x="535" y="56" width="1" height="58" fill="#f01010"/>
<rect x="534" y="70" width="3" height="44" fill="#f01010"/>
<rect x="537" y="68" width="1" height="8" fill="#1050e0"/>
<rect x="536" y="70" width="3" height="2" fill="#1050e0"/>
<rect x="539" y="69" width="1" height="13" fill="#f01010"/>
<rect x="538" y="72" width="3" height="2" fill="#f01010"/>
<rect x="541" y="56" width="1" height="23" fill="#1050e0"/>
<rect x="540" y="76" width="3" height="2" fill="#1050e0"/>
<rect x="543" y="80" width="1" height="44" fill="#1050e0"/>
<rect x="542" y="81" width="3" height="43" fill="#1050e0"/>
<rect x="545" y="113" width="1" height="13" fill="#1050e0"/>
<rect x="544" y="115" width="3" height="9" fill="#1050e0"/>
<rect x="547" y="121" width="1" height="6" fill="#1050e0"/>
<rect x="546" y="123" width="3" height="3" fill="#1050e0"/>
<rect x="549" y="113" width="1" height="13" fill="#1050e0"/>
<rect x="548" y="116" width="3" height="9" fill="#1050e0"/>
<rect x="551" y="119" width="1" height="10" fill="#1050e0"/>
<rect x="550" y="119" width="3" height="9" fill="#1050e0"/>
<rect x="553" y="120" width="1" height="10" fill="#f01010"/>
<rect x="552" y="120" width="3" height="7" fill="#f01010"/>
<rect x="555" y="122" width="1" height="9" fill="#1050e0"/>
<rect x="554" y="122" width="3" height="8" fill="#1050e0"/>
<rect x="557" y="125" width="1" height="7" fill="#f01010"/>
<rect x="556" y="125" width="3" height="7" fill="#f01010"/>
<rect x="559" y="126" width="1" height="12" fill="#1050e0"/>
<rect x="558" y="126" width="3" height="9" fill="#1050e0"/>
<rect x="561" y="126" width="1" height="12" fill="#1050e0"/>
<rect x="560" y="126" width="3" height="11" fill="#1050e0"/>
<rect x="563" y="125" width="1" height="10" fill="#f01010"/>
<rect x="562" y="125" width="3" height="8" fill="#f01010"/>
<rect x="565" y="122" width="1" height="18" fill="#f01010"/>
<rect x="564" y="122" width="3" height="18" fill="#f01010"/>
<rect x="567" y="123" width="1" height="14" fill="#1050e0"/>
<rect x="566" y="124" width="3" height="13" fill="#1050e0"/>
<rect x="569" y="126" width="1" height="7" fill="#1050e0"/>
<rect x="568" y="127" width="3" height="6" fill="#1050e0"/>
<rect x="571" y="117" width="1" height="13" fill="#f01010"/>
<rect x="570" y="118" width="3" height="10" fill="#f01010"/>
<rect x="573" y="113" width="1" height="12" fill="#f01010"/>
<rect x="572" y="114" width="3" height="10" fill="#f01010"/>
<rect x="575" y="107" width="1" height="10" fill="#f01010"/>
<rect x="574" y="109" width="3" height="8" fill="#f01010"/>
<rect x="577" y="113" width="1" height="8" fill="#1050e0"/>
<rect x="576" y="113" width="3" height="6" fill="#1050e0"/>
<rect x="579" y="111" width="1" height="7" fill="#1050e0"/>
<rect x="578" y="114" width="3" height="4" fill="#1050e0"/>
<rect x="581" y="114" width="1" height="3" fill="#1050e0"/>
<rect x="580" y="114" width="3" height="3" fill="#1050e0"/>
<rect x="583" y="112" width="1" height="4" fill="#f01010"/>
<rect x="582" y="113" width="3" height="3" fill="#f01010"/>
<rect x="585" y="113" width="1" height="3" fill="#f01010"/>
<rect x="584" y="113" width="3" height="3" fill="#f01010"/>
<rect x="588" y="100" width="1" height="18" fill="#f01010"/>
<rect x="587" y="100" width="3" height="15" fill="#f01010"/>
<rect x="590" y="98" width="1" height="10" fill="#1050e0"/>
<rect x="589" y="99" width="3" height="7" fill="#1050e0"/>
<rect x="592" y="100" width="1" height="7" fill="#f01010"/>
<rect x="591" y="100" width="3" height="6" fill="#f01010"/>
<rect x="594" y="101" width="1" height="6" fill="#1050e0"/>
<rect x="593" y="102" width="3" height="3" fill="#1050e0"/>
<rect x="596" y="97" width="1" height="7" fill="#f01010"/>
<rect x="595" y="100" width="3" height="4" fill="#f01010"/>
<rect x="598" y="98" width="1" height="7" fill="#f01010"/>
<rect x="597" y="99" width="3" height="5" fill="#f01010"/>
<rect x="600" y="96" width="1" height="7" fill="#1050e0"/>
<rect x="599" y="96" width="3" height="6" fill="#1050e0"/>
<rect x="602" y="97" width="1" height="3" fill="#1050e0"/>
<rect x="601" y="97" width="3" height="3" fill="#1050e0"/>
<rect x="604" y="96" width="1" height="8" fill="#f01010"/>
<rect x="603" y="96" width="3" height="4" fill="#f01010"/>
<rect x="606" y="86" width="1" height="12" fill="#f01010"/>
<rect x="605" y="88" width="3" height="8" fill="#f01010"/>
<rect x="608" y="88" width="1" height="7" fill="#1050e0"/>
<rect x="607" y="88" width="3" height="5" fill="#1050e0"/>
<rect x="610" y="81" width="1" height="9" fill="#f01010"/>
<rect x="609" y="82" width="3" height="8" fill="#f01010"/>
<rect x="612" y="82" width="1" height="5" fill="#1050e0"/>
<rect x="611" y="83" width="3" height="4" fill="#1050e0"/>
<rect x="614" y="80" width="1" height="11" fill="#1050e0"/>
<rect x="613" y="83" width="3" height="5" fill="#1050e0"/>
<rect x="616" y="82" width="1" height="10" fill="#f01010"/>
<rect x="615" y="83" width="3" height="6" fill="#f01010"/>
</g>
<g>
<path d="M7.0,111.6 C11.3,114.7 24.2,124.8 33.0,130.0 C41.8,135.2 51.7,138.6 60.0,143.0 C68.3,147.4 75.3,152.0 83.0,156.5 C90.7,161.0 98.7,165.4 106.0,170.0 C113.3,174.6 120.4,180.3 126.6,184.0 C132.8,187.7 137.4,189.2 143.0,192.0 C148.6,194.8 153.1,197.8 160.0,200.5 C166.9,203.2 176.3,206.1 184.4,208.0 C192.5,209.9 199.5,211.2 208.8,212.0 C218.1,212.8 230.4,213.1 240.0,212.5 C249.6,211.9 257.7,208.9 266.5,208.5 C275.3,208.1 283.5,209.8 293.0,210.0 C302.5,210.2 313.8,211.2 323.3,210.0 C332.8,208.8 341.9,205.6 350.0,203.0 C358.1,200.4 365.3,197.2 372.0,194.3 C378.7,191.4 381.0,190.3 390.0,185.4 C399.0,180.5 416.3,169.9 426.0,165.0 C435.7,160.1 441.3,158.2 448.0,156.0 C454.7,153.8 460.0,152.9 466.0,151.5 C472.0,150.1 477.5,147.9 484.2,147.7 C490.9,147.4 498.9,149.3 506.3,150.0 C513.7,150.7 522.5,152.6 528.5,152.0 C534.5,151.4 536.7,148.9 542.0,146.6 C547.3,144.3 553.5,140.0 560.2,138.0 C566.9,136.0 574.9,136.2 582.3,134.8 C589.7,133.4 599.0,131.0 604.5,129.3 C610.0,127.6 613.8,125.5 615.6,124.8" fill="none" stroke="#808080" stroke-width="1"/>
<path d="M7.8,166.6 C11.9,167.6 24.0,171.8 32.6,172.8 C41.2,173.8 52.4,172.9 59.2,172.8 C66.0,172.7 69.0,171.3 73.4,172.0 C77.8,172.7 81.4,174.8 85.8,177.0 C90.2,179.2 94.0,181.2 100.0,185.0 C106.0,188.8 114.7,195.2 122.0,200.0 C129.3,204.8 137.7,209.5 144.0,214.0 C150.3,218.5 154.1,222.4 160.0,227.0 C165.9,231.6 173.4,238.7 179.5,241.8 C185.6,244.9 190.5,245.3 196.6,245.5 C202.7,245.7 208.8,245.8 216.0,243.0 C223.2,240.2 232.5,234.7 240.0,228.4 C247.5,222.1 253.7,212.2 260.8,205.0 C267.9,197.8 276.3,189.7 282.8,185.0 C289.3,180.3 294.8,178.3 300.0,176.7 C305.2,175.1 305.7,176.6 314.0,175.5 C322.3,174.4 341.8,171.1 350.0,170.0 C358.2,168.9 358.8,168.6 363.2,168.8 C367.6,169.0 372.0,170.5 376.5,171.0 C381.0,171.5 384.8,173.0 390.0,172.0 C395.2,171.0 401.3,168.4 408.0,165.0 C414.7,161.6 422.9,156.3 430.3,151.5 C437.7,146.7 446.6,139.7 452.5,136.0 C458.4,132.3 460.7,130.7 466.0,129.3 C471.3,127.9 477.5,127.4 484.2,127.7 C490.9,128.0 498.9,129.7 506.3,131.0 C513.7,132.3 522.5,135.1 528.5,135.5 C534.5,135.9 536.7,133.8 542.0,133.3 C547.3,132.8 555.0,132.0 560.2,132.6 C565.5,133.2 568.0,136.8 573.5,137.0 C579.0,137.2 586.4,135.5 593.4,133.7 C600.4,131.9 611.9,127.3 615.6,126.0" fill="none" stroke="#30a030" stroke-width="1"/>
<path d="M7.8,171.0 C9.3,171.3 13.4,172.1 16.6,172.8 C19.9,173.6 23.2,174.3 27.3,175.5 C31.4,176.7 36.2,180.0 41.5,180.0 C46.8,180.0 55.1,176.8 59.2,175.5 C63.3,174.2 63.9,172.6 66.3,172.0 C68.7,171.4 70.2,170.8 73.4,172.0 C76.7,173.2 81.7,174.3 85.8,179.0 C89.9,183.7 94.0,193.2 98.0,200.0 C102.0,206.8 106.3,213.7 110.0,220.0 C113.7,226.3 116.7,232.0 120.0,238.0 C123.3,244.0 127.0,251.3 130.0,256.0 C133.0,260.7 135.0,263.7 138.0,266.0 C141.0,268.3 143.7,269.5 148.0,270.0 C152.3,270.5 158.8,270.2 164.0,269.0 C169.2,267.8 175.3,266.1 179.5,262.6 C183.7,259.1 186.1,252.9 189.3,248.0 C192.6,243.1 195.8,237.9 199.0,233.0 C202.2,228.1 205.6,223.4 208.8,218.7 C212.1,214.0 215.2,209.1 218.5,205.0 C221.8,200.9 225.7,196.1 228.3,194.0 C230.9,191.9 231.4,195.3 234.0,192.6 C236.6,189.9 240.6,183.7 243.8,178.0 C247.1,172.3 249.8,163.5 253.5,158.4 C257.1,153.3 262.4,149.8 265.7,147.4 C268.9,145.0 270.6,143.6 273.0,143.8 C275.4,144.0 277.5,145.4 280.3,148.7 C283.1,151.9 286.7,158.4 290.0,163.3 C293.3,168.2 297.2,173.9 300.0,178.0 C302.8,182.1 305.3,185.5 307.0,187.7 C308.7,189.9 306.6,191.2 310.0,191.0 C313.4,190.8 322.9,188.2 327.7,186.5 C332.5,184.8 335.1,183.0 338.8,181.0 C342.5,179.0 346.3,176.5 350.0,174.3 C353.7,172.1 357.3,169.8 361.0,167.6 C364.7,165.4 368.3,163.2 372.0,161.0 C375.7,158.8 378.6,157.0 383.2,154.3 C387.8,151.6 394.4,148.6 399.3,144.8 C404.2,141.0 408.2,135.0 412.6,131.5 C417.1,128.0 421.6,125.6 426.0,123.8 C430.4,122.0 434.8,122.2 439.2,120.4 C443.6,118.6 448.0,113.4 452.5,112.7 C457.0,112.0 462.2,115.3 466.0,116.0 C469.8,116.7 472.3,115.2 475.3,116.6 C478.3,118.0 480.9,120.5 484.2,124.4 C487.5,128.3 491.6,135.4 495.3,140.0 C499.0,144.6 502.6,148.5 506.3,152.0 C510.0,155.5 514.1,159.1 517.4,161.0 C520.7,162.9 523.7,164.1 526.3,163.2 C528.9,162.3 531.0,158.3 533.0,155.4 C535.0,152.5 536.5,148.8 538.0,146.0 C539.5,143.2 540.2,141.4 542.0,138.8 C543.8,136.2 546.0,133.3 549.0,130.4 C552.0,127.5 556.5,123.9 560.2,121.5 C563.9,119.1 568.0,115.6 571.3,116.0 C574.6,116.4 577.4,122.8 580.0,123.7 C582.6,124.6 583.8,123.0 586.8,121.5 C589.8,120.0 594.2,117.4 597.9,115.0 C601.6,112.6 606.0,109.4 609.0,107.0 C612.0,104.6 614.5,101.6 615.6,100.5" fill="none" stroke="#f0a800" stroke-width="1.8"/>
<polyline points="8.0,174.6 10.0,177.7 12.0,179.6 14.0,181.5 16.0,183.1 18.0,183.3 20.0,182.2 22.0,181.9 24.0,182.0 26.0,182.4 28.0,183.6 30.0,183.6 32.0,183.5 34.0,182.3 36.0,180.8 39.0,181.4 41.0,181.9 43.0,181.4 45.0,179.8 47.0,178.2 49.0,176.6 51.0,176.0 53.0,175.3 55.0,173.6 57.0,172.3 59.0,169.5 61.0,167.2 63.0,166.2 65.0,165.9 67.0,166.2 69.0,166.8 71.0,167.6 73.0,168.8 75.0,172.2 77.0,175.3 79.0,179.7 81.0,184.8 83.0,189.4 85.0,194.3 87.0,198.4 89.0,202.1 91.0,206.8 93.0,210.5 95.0,213.7 97.0,218.1 100.0,221.4 102.0,225.2 104.0,229.2 106.0,233.3 108.0,237.4 110.0,241.9 112.0,245.1 114.0,248.9 116.0,253.0 118.0,255.7 120.0,258.7 122.0,261.7 124.0,264.6 126.0,266.9 128.0,269.8 130.0,270.8 132.0,271.3 134.0,271.9 136.0,272.4 138.0,272.4 140.0,271.4 142.0,269.9 144.0,268.1 146.0,267.4 148.0,266.6 150.0,266.4 152.0,266.4 154.0,266.4 156.0,265.9 158.0,265.7 161.0,266.0 163.0,265.9 165.0,266.0 167.0,265.3 169.0,264.0 171.0,263.6 173.0,263.4 175.0,262.7 177.0,262.2 179.0,261.5 181.0,258.9 183.0,255.8 185.0,251.9 187.0,244.3 189.0,237.2 191.0,229.7 193.0,222.5 195.0,215.8 197.0,209.5 199.0,204.0 201.0,200.6 203.0,198.2 205.0,196.2 207.0,198.5 209.0,199.4 211.0,200.2 213.0,200.9 215.0,202.0 217.0,200.9 219.0,198.3 222.0,195.8 224.0,193.5 226.0,191.3 228.0,188.0 230.0,186.8 232.0,186.0 234.0,183.0 236.0,178.9 238.0,175.4 240.0,171.9 242.0,165.9 244.0,159.7 246.0,153.3 248.0,148.5 250.0,143.8 252.0,139.0 254.0,135.9 256.0,133.1 258.0,133.3 260.0,133.8 262.0,135.7 264.0,137.2 266.0,139.3 268.0,140.8 270.0,143.3 272.0,147.3 274.0,151.1 276.0,155.7 278.0,158.9 280.0,162.4 283.0,167.8 285.0,173.7 287.0,179.4 289.0,184.8 291.0,187.3 293.0,189.1 295.0,191.9 297.0,193.1 299.0,193.9 301.0,195.4 303.0,195.3 305.0,195.0 307.0,193.8 309.0,192.5 311.0,192.1 313.0,190.8 315.0,188.3 317.0,184.3 319.0,182.3 321.0,181.2 323.0,179.7 325.0,179.2 327.0,179.3 329.0,177.9 331.0,176.3 333.0,174.3 335.0,173.1 337.0,175.7 339.0,177.2 341.0,176.8 344.0,176.8 346.0,176.0 348.0,173.6 350.0,172.7 352.0,170.5 354.0,169.0 356.0,168.0 358.0,165.3 360.0,161.9 362.0,160.6 364.0,159.4 366.0,156.7 368.0,155.0 370.0,153.7 372.0,153.0 374.0,153.6 376.0,154.0 378.0,154.5 380.0,154.4 382.0,152.8 384.0,150.5 386.0,148.7 388.0,146.5 390.0,144.8 392.0,143.7 394.0,141.2 396.0,139.6 398.0,138.0 400.0,135.4 402.0,133.3 405.0,132.2 407.0,131.5 409.0,130.7 411.0,128.8 413.0,126.3 415.0,124.4 417.0,120.9 419.0,118.2 421.0,117.3 423.0,116.2 425.0,115.2 427.0,114.3 429.0,114.1 431.0,116.3 433.0,118.8 435.0,119.3 437.0,120.1 439.0,119.5 441.0,118.5 443.0,116.8 445.0,114.8 447.0,112.6 449.0,112.5 451.0,110.3 453.0,108.5 455.0,106.9 457.0,105.3 459.0,106.4 461.0,108.5 463.0,111.5 466.0,114.9 468.0,117.8 470.0,119.6 472.0,121.5 474.0,123.1 476.0,125.4 478.0,128.8 480.0,129.2 482.0,130.0 484.0,132.6 486.0,135.0 488.0,138.4 490.0,141.9 492.0,144.4 494.0,148.5 496.0,152.9 498.0,156.0 500.0,160.8 502.0,163.5 504.0,164.2 506.0,164.8 508.0,165.9 510.0,165.6 512.0,166.7 514.0,166.7 516.0,165.5 518.0,164.8 520.0,163.7 522.0,162.8 524.0,161.8 527.0,160.2 529.0,160.0 531.0,156.0 533.0,151.6 535.0,141.7 537.0,133.1 539.0,124.3 541.0,116.1 543.0,112.9 545.0,109.9 547.0,107.8 549.0,103.8 551.0,104.2 553.0,104.0 555.0,110.0 557.0,115.2 559.0,121.5 561.0,127.4 563.0,127.5 565.0,127.3 567.0,128.4 569.0,129.2 571.0,128.2 573.0,127.5 575.0,125.4 577.0,124.9 579.0,123.2 581.0,121.2 583.0,120.0 585.0,119.1 588.0,115.5 590.0,112.8 592.0,111.1 594.0,110.2 596.0,109.3 598.0,107.3 600.0,105.6 602.0,104.0 604.0,102.3 606.0,99.8 608.0,99.0 610.0,96.6 612.0,95.2 614.0,93.6 616.0,91.8" fill="none" stroke="#3858b0" stroke-width="1" stroke-linejoin="round" />
<polyline points="8.0,174.6 10.0,177.7 12.0,179.6 14.0,181.5 16.0,183.1 18.0,185.0 20.0,183.9 22.0,183.2 24.0,182.4 26.0,181.6 28.0,182.2 30.0,183.3 32.0,183.8 34.0,182.2 36.0,179.9 39.0,180.6 41.0,180.6 43.0,179.0 45.0,177.4 47.0,176.6 49.0,172.7 51.0,171.4 53.0,171.6 55.0,169.8 57.0,168.0 59.0,166.4 61.0,163.0 63.0,160.9 65.0,162.0 67.0,164.4 69.0,167.1 71.0,172.1 73.0,176.7 75.0,182.4 77.0,186.3 79.0,192.3 81.0,197.4 83.0,202.0 85.0,206.2 87.0,210.5 89.0,212.0 91.0,216.1 93.0,218.9 95.0,221.3 97.0,225.8 100.0,230.8 102.0,234.2 104.0,239.5 106.0,245.3 108.0,248.9 110.0,253.1 112.0,256.1 114.0,258.4 116.0,260.8 118.0,262.6 120.0,264.4 122.0,267.4 124.0,270.8 126.0,273.0 128.0,277.0 130.0,277.2 132.0,275.2 134.0,273.1 136.0,271.9 138.0,267.9 140.0,265.7 142.0,264.5 144.0,263.0 146.0,262.8 148.0,265.2 150.0,267.0 152.0,268.2 154.0,269.8 156.0,269.0 158.0,266.2 161.0,265.0 163.0,263.6 165.0,262.1 167.0,261.6 169.0,261.8 171.0,262.3 173.0,263.3 175.0,263.3 177.0,262.7 179.0,261.2 181.0,255.4 183.0,248.3 185.0,240.5 187.0,225.9 189.0,213.3 191.0,204.0 193.0,196.7 195.0,191.2 197.0,193.1 199.0,194.7 201.0,197.2 203.0,199.7 205.0,201.3 207.0,204.0 209.0,204.0 211.0,203.3 213.0,202.2 215.0,202.7 217.0,197.9 219.0,192.6 222.0,188.4 224.0,184.8 226.0,179.9 228.0,178.1 230.0,181.0 232.0,183.7 234.0,181.2 236.0,177.8 238.0,172.6 240.0,162.9 242.0,148.1 244.0,138.2 246.0,128.8 248.0,124.4 250.0,124.8 252.0,129.9 254.0,133.7 256.0,137.4 258.0,142.3 260.0,142.8 262.0,141.5 264.0,140.8 266.0,141.3 268.0,139.3 270.0,143.7 272.0,153.1 274.0,161.4 276.0,170.2 278.0,178.4 280.0,181.1 283.0,182.5 285.0,185.9 287.0,188.6 289.0,191.1 291.0,193.6 293.0,195.8 295.0,198.0 297.0,197.6 299.0,196.6 301.0,197.1 303.0,194.9 305.0,192.0 307.0,190.1 309.0,188.3 311.0,187.1 313.0,186.7 315.0,184.6 317.0,178.5 319.0,176.3 321.0,175.3 323.0,172.7 325.0,173.8 327.0,180.2 329.0,179.6 331.0,177.2 333.0,175.9 335.0,172.3 337.0,171.2 339.0,174.8 341.0,176.3 344.0,177.6 346.0,179.6 348.0,176.1 350.0,170.7 352.0,164.8 354.0,160.3 356.0,156.3 358.0,154.5 360.0,153.1 362.0,156.4 364.0,158.4 366.0,157.1 368.0,155.4 370.0,154.3 372.0,149.5 374.0,148.8 376.0,150.9 378.0,153.5 380.0,154.4 382.0,156.2 384.0,152.2 386.0,146.5 388.0,139.4 390.0,135.1 392.0,131.2 394.0,130.2 396.0,132.7 398.0,136.6 400.0,135.7 402.0,135.5 405.0,134.1 407.0,130.2 409.0,124.9 411.0,122.0 413.0,117.1 415.0,114.7 417.0,111.6 419.0,111.6 421.0,112.7 423.0,115.3 425.0,115.6 427.0,117.1 429.0,116.7 431.0,120.0 433.0,122.2 435.0,123.1 437.0,123.1 439.0,122.3 441.0,117.0 443.0,111.4 445.0,106.6 447.0,102.2 449.0,102.8 451.0,103.7 453.0,105.7 455.0,107.1 457.0,108.4 459.0,110.0 461.0,113.3 463.0,117.3 466.0,122.8 468.0,127.1 470.0,129.2 472.0,129.8 474.0,129.0 476.0,128.1 478.0,130.6 480.0,129.2 482.0,130.2 484.0,136.2 486.0,142.0 488.0,146.2 490.0,154.6 492.0,158.6 494.0,160.7 496.0,163.8 498.0,165.8 500.0,166.9 502.0,168.5 504.0,167.6 506.0,165.8 508.0,166.0 510.0,164.3 512.0,164.9 514.0,165.8 516.0,165.2 518.0,163.7 520.0,163.0 522.0,160.6 524.0,157.7 527.0,155.3 529.0,156.3 531.0,149.1 533.0,142.5 535.0,125.7 537.0,110.9 539.0,92.3 541.0,83.1 543.0,83.3 545.0,94.1 547.0,104.7 549.0,115.3 551.0,125.3 553.0,124.6 555.0,125.9 557.0,125.7 559.0,127.7 561.0,129.5 563.0,130.4 565.0,128.7 567.0,131.1 569.0,130.7 571.0,126.9 573.0,124.6 575.0,122.2 577.0,118.6 579.0,115.8 581.0,115.5 583.0,115.4 585.0,116.1 588.0,112.3 590.0,109.9 592.0,106.6 594.0,104.9 596.0,102.5 598.0,102.2 600.0,101.4 602.0,101.4 604.0,99.6 606.0,97.1 608.0,95.8 610.0,91.8 612.0,89.1 614.0,87.6 616.0,86.5" fill="none" stroke="#e040c0" stroke-width="1" stroke-linejoin="round" />
</g>
<g shape-rendering="crispEdges">
<rect x="7" y="426" width="2" height="5" fill="#f01010"/>
<rect x="9" y="424" width="2" height="7" fill="#f01010"/>
<rect x="11" y="426" width="2" height="5" fill="#1050e0"/>
<rect x="13" y="426" width="2" height="5" fill="#f01010"/>
<rect x="15" y="425" width="2" height="6" fill="#f01010"/>
<rect x="17" y="424" width="2" height="7" fill="#f01010"/>
<rect x="19" y="426" width="2" height="5" fill="#1050e0"/>
<rect x="21" y="424" width="2" height="7" fill="#f01010"/>
<rect x="23" y="425" width="2" height="6" fill="#1050e0"/>
<rect x="25" y="425" width="2" height="6" fill="#1050e0"/>
<rect x="27" y="426" width="2" height="5" fill="#1050e0"/>
<rect x="29" y="423" width="2" height="8" fill="#f01010"/>
<rect x="31" y="427" width="2" height="4" fill="#1050e0"/>
<rect x="33" y="427" width="2" height="4" fill="#f01010"/>
<rect x="35" y="427" width="2" height="4" fill="#1050e0"/>
<rect x="38" y="420" width="2" height="11" fill="#f01010"/>
<rect x="40" y="427" width="2" height="4" fill="#1050e0"/>
<rect x="42" y="427" width="2" height="4" fill="#1050e0"/>
<rect x="44" y="427" width="2" height="4" fill="#1050e0"/>
<rect x="46" y="424" width="2" height="7" fill="#f01010"/>
<rect x="48" y="424" width="2" height="7" fill="#f01010"/>
<rect x="50" y="425" width="2" height="6" fill="#1050e0"/>
<rect x="52" y="426" width="2" height="5" fill="#1050e0"/>
<rect x="54" y="417" width="2" height="14" fill="#f01010"/>
<rect x="56" y="425" width="2" height="6" fill="#1050e0"/>
<rect x="58" y="384" width="2" height="47" fill="#f01010"/>
<rect x="60" y="425" width="2" height="6" fill="#1050e0"/>
<rect x="62" y="422" width="2" height="9" fill="#1050e0"/>
<rect x="64" y="425" width="2" height="6" fill="#1050e0"/>
<rect x="66" y="421" width="2" height="10" fill="#f01010"/>
<rect x="68" y="421" width="2" height="10" fill="#f01010"/>
<rect x="70" y="423" width="2" height="8" fill="#1050e0"/>
<rect x="72" y="425" width="2" height="6" fill="#1050e0"/>
<rect x="74" y="421" width="2" height="10" fill="#f01010"/>
<rect x="76" y="425" width="2" height="6" fill="#1050e0"/>
<rect x="78" y="424" width="2" height="7" fill="#f01010"/>
<rect x="80" y="426" width="2" height="5" fill="#1050e0"/>
<rect x="82" y="424" width="2" height="7" fill="#f01010"/>
<rect x="84" y="424" width="2" height="7" fill="#f01010"/>
<rect x="86" y="424" width="2" height="7" fill="#f01010"/>
<rect x="88" y="425" width="2" height="6" fill="#1050e0"/>
<rect x="90" y="410" width="2" height="21" fill="#f01010"/>
<rect x="92" y="417" width="2" height="14" fill="#f01010"/>
<rect x="94" y="425" width="2" height="6" fill="#1050e0"/>
<rect x="96" y="426" width="2" height="5" fill="#1050e0"/>
<rect x="99" y="424" width="2" height="7" fill="#f01010"/>
<rect x="101" y="426" width="2" height="5" fill="#1050e0"/>
<rect x="103" y="417" width="2" height="14" fill="#f01010"/>
<rect x="105" y="424" width="2" height="7" fill="#1050e0"/>
<rect x="107" y="424" width="2" height="7" fill="#1050e0"/>
<rect x="109" y="421" width="2" height="10" fill="#f01010"/>
<rect x="111" y="421" width="2" height="10" fill="#1050e0"/>
<rect x="113" y="420" width="2" height="11" fill="#f01010"/>
<rect x="115" y="420" width="2" height="11" fill="#1050e0"/>
<rect x="117" y="419" width="2" height="12" fill="#f01010"/>
<rect x="119" y="418" width="2" height="13" fill="#f01010"/>
<rect x="121" y="398" width="2" height="33" fill="#f01010"/>
<rect x="123" y="412" width="2" height="19" fill="#1050e0"/>
<rect x="125" y="416" width="2" height="15" fill="#1050e0"/>
<rect x="127" y="423" width="2" height="8" fill="#1050e0"/>
<rect x="129" y="330" width="2" height="101" fill="#f01010"/>
<rect x="131" y="402" width="2" height="29" fill="#1050e0"/>
<rect x="133" y="404" width="2" height="27" fill="#f01010"/>
<rect x="135" y="406" width="2" height="25" fill="#1050e0"/>
<rect x="137" y="416" width="2" height="15" fill="#1050e0"/>
<rect x="139" y="398" width="2" height="33" fill="#f01010"/>
<rect x="141" y="409" width="2" height="22" fill="#1050e0"/>
<rect x="143" y="415" width="2" height="16" fill="#1050e0"/>
<rect x="145" y="422" width="2" height="9" fill="#1050e0"/>
<rect x="147" y="413" width="2" height="18" fill="#1050e0"/>
<rect x="149" y="418" width="2" height="13" fill="#1050e0"/>
<rect x="151" y="413" width="2" height="18" fill="#1050e0"/>
<rect x="153" y="418" width="2" height="13" fill="#f01010"/>
<rect x="155" y="414" width="2" height="17" fill="#f01010"/>
<rect x="157" y="417" width="2" height="14" fill="#1050e0"/>
<rect x="160" y="414" width="2" height="17" fill="#f01010"/>
<rect x="162" y="416" width="2" height="15" fill="#1050e0"/>
<rect x="164" y="415" width="2" height="16" fill="#f01010"/>
<rect x="166" y="420" width="2" height="11" fill="#1050e0"/>
<rect x="168" y="422" width="2" height="9" fill="#1050e0"/>
<rect x="170" y="395" width="2" height="36" fill="#f01010"/>
<rect x="172" y="419" width="2" height="12" fill="#1050e0"/>
<rect x="174" y="421" width="2" height="10" fill="#1050e0"/>
<rect x="176" y="413" width="2" height="18" fill="#f01010"/>
<rect x="178" y="416" width="2" height="15" fill="#1050e0"/>
<rect x="180" y="344" width="2" height="87" fill="#f01010"/>
<rect x="182" y="377" width="2" height="54" fill="#1050e0"/>
<rect x="184" y="415" width="2" height="16" fill="#1050e0"/>
<rect x="186" y="340" width="2" height="91" fill="#f01010"/>
<rect x="188" y="364" width="2" height="67" fill="#1050e0"/>
<rect x="190" y="414" width="2" height="17" fill="#1050e0"/>
<rect x="192" y="414" width="2" height="17" fill="#1050e0"/>
<rect x="194" y="417" width="2" height="14" fill="#1050e0"/>
<rect x="196" y="412" width="2" height="19" fill="#f01010"/>
<rect x="198" y="416" width="2" height="15" fill="#1050e0"/>
<rect x="200" y="422" width="2" height="9" fill="#1050e0"/>
<rect x="202" y="415" width="2" height="16" fill="#f01010"/>
<rect x="204" y="420" width="2" height="11" fill="#1050e0"/>
<rect x="206" y="422" width="2" height="9" fill="#1050e0"/>
<rect x="208" y="420" width="2" height="11" fill="#f01010"/>
<rect x="210" y="415" width="2" height="16" fill="#f01010"/>
<rect x="212" y="420" width="2" height="11" fill="#1050e0"/>
<rect x="214" y="415" width="2" height="16" fill="#f01010"/>
<rect x="216" y="413" width="2" height="18" fill="#f01010"/>
<rect x="218" y="364" width="2" height="67" fill="#f01010"/>
<rect x="221" y="419" width="2" height="12" fill="#1050e0"/>
<rect x="223" y="418" width="2" height="13" fill="#f01010"/>
<rect x="225" y="416" width="2" height="15" fill="#f01010"/>
<rect x="227" y="412" width="2" height="19" fill="#f01010"/>
<rect x="229" y="417" width="2" height="14" fill="#1050e0"/>
<rect x="231" y="416" width="2" height="15" fill="#f01010"/>
<rect x="233" y="385" width="2" height="46" fill="#f01010"/>
<rect x="235" y="421" width="2" height="10" fill="#1050e0"/>
<rect x="237" y="397" width="2" height="34" fill="#f01010"/>
<rect x="239" y="415" width="2" height="16" fill="#1050e0"/>
<rect x="241" y="379" width="2" height="52" fill="#f01010"/>
<rect x="243" y="418" width="2" height="13" fill="#1050e0"/>
<rect x="245" y="402" width="2" height="29" fill="#1050e0"/>
<rect x="247" y="393" width="2" height="38" fill="#f01010"/>
<rect x="249" y="392" width="2" height="39" fill="#f01010"/>
<rect x="251" y="418" width="2" height="13" fill="#1050e0"/>
<rect x="253" y="418" width="2" height="13" fill="#1050e0"/>
<rect x="255" y="419" width="2" height="12" fill="#1050e0"/>
<rect x="257" y="422" width="2" height="9" fill="#1050e0"/>
<rect x="259" y="405" width="2" height="26" fill="#f01010"/>
<rect x="261" y="421" width="2" height="10" fill="#1050e0"/>
<rect x="263" y="421" width="2" height="10" fill="#1050e0"/>
<rect x="265" y="424" width="2" height="7" fill="#1050e0"/>
<rect x="267" y="418" width="2" height="13" fill="#f01010"/>
<rect x="269" y="423" width="2" height="8" fill="#1050e0"/>
<rect x="271" y="407" width="2" height="24" fill="#f01010"/>
<rect x="273" y="418" width="2" height="13" fill="#1050e0"/>
<rect x="275" y="425" width="2" height="6" fill="#1050e0"/>
<rect x="277" y="422" width="2" height="9" fill="#f01010"/>
<rect x="279" y="420" width="2" height="11" fill="#f01010"/>
<rect x="282" y="419" width="2" height="12" fill="#f01010"/>
<rect x="284" y="422" width="2" height="9" fill="#1050e0"/>
<rect x="286" y="424" width="2" height="7" fill="#1050e0"/>
<rect x="288" y="424" width="2" height="7" fill="#1050e0"/>
<rect x="290" y="419" width="2" height="12" fill="#f01010"/>
<rect x="292" y="424" width="2" height="7" fill="#1050e0"/>
<rect x="294" y="422" width="2" height="9" fill="#f01010"/>
<rect x="296" y="425" width="2" height="6" fill="#1050e0"/>
<rect x="298" y="422" width="2" height="9" fill="#f01010"/>
<rect x="300" y="420" width="2" height="11" fill="#f01010"/>
<rect x="302" y="425" width="2" height="6" fill="#1050e0"/>
<rect x="304" y="410" width="2" height="21" fill="#f01010"/>
<rect x="306" y="423" width="2" height="8" fill="#1050e0"/>
<rect x="308" y="420" width="2" height="11" fill="#f01010"/>
<rect x="310" y="421" width="2" height="10" fill="#1050e0"/>
<rect x="312" y="424" width="2" height="7" fill="#1050e0"/>
<rect x="314" y="420" width="2" height="11" fill="#f01010"/>
<rect x="316" y="402" width="2" height="29" fill="#f01010"/>
<rect x="318" y="420" width="2" height="11" fill="#f01010"/>
<rect x="320" y="426" width="2" height="5" fill="#1050e0"/>
<rect x="322" y="423" width="2" height="8" fill="#f01010"/>
<rect x="324" y="423" width="2" height="8" fill="#1050e0"/>
<rect x="326" y="424" width="2" height="7" fill="#1050e0"/>
<rect x="328" y="418" width="2" height="13" fill="#f01010"/>
<rect x="330" y="423" width="2" height="8" fill="#1050e0"/>
<rect x="332" y="423" width="2" height="8" fill="#f01010"/>
<rect x="334" y="420" width="2" height="11" fill="#f01010"/>
<rect x="336" y="425" width="2" height="6" fill="#1050e0"/>
<rect x="338" y="404" width="2" height="27" fill="#f01010"/>
<rect x="340" y="419" width="2" height="12" fill="#1050e0"/>
<rect x="343" y="424" width="2" height="7" fill="#1050e0"/>
<rect x="345" y="417" width="2" height="14" fill="#f01010"/>
<rect x="347" y="418" width="2" height="13" fill="#1050e0"/>
<rect x="349" y="417" width="2" height="14" fill="#f01010"/>
<rect x="351" y="407" width="2" height="24" fill="#f01010"/>
<rect x="353" y="410" width="2" height="21" fill="#1050e0"/>
<rect x="355" y="421" width="2" height="10" fill="#1050e0"/>
<rect x="357" y="416" width="2" height="15" fill="#f01010"/>
<rect x="359" y="419" width="2" height="12" fill="#1050e0"/>
<rect x="361" y="421" width="2" height="10" fill="#1050e0"/>
<rect x="363" y="420" width="2" height="11" fill="#f01010"/>
<rect x="365" y="422" width="2" height="9" fill="#1050e0"/>
<rect x="367" y="424" width="2" height="7" fill="#1050e0"/>
<rect x="369" y="423" width="2" height="8" fill="#f01010"/>
<rect x="371" y="417" width="2" height="14" fill="#f01010"/>
<rect x="373" y="403" width="2" height="28" fill="#f01010"/>
<rect x="375" y="416" width="2" height="15" fill="#1050e0"/>
<rect x="377" y="422" width="2" height="9" fill="#1050e0"/>
<rect x="379" y="422" width="2" height="9" fill="#f01010"/>
<rect x="381" y="420" width="2" height="11" fill="#f01010"/>
<rect x="383" y="422" width="2" height="9" fill="#1050e0"/>
<rect x="385" y="403" width="2" height="28" fill="#f01010"/>
<rect x="387" y="413" width="2" height="18" fill="#1050e0"/>
<rect x="389" y="417" width="2" height="14" fill="#1050e0"/>
<rect x="391" y="418" width="2" height="13" fill="#1050e0"/>
<rect x="393" y="420" width="2" height="11" fill="#1050e0"/>
<rect x="395" y="419" width="2" height="12" fill="#f01010"/>
<rect x="397" y="419" width="2" height="12" fill="#1050e0"/>
<rect x="399" y="422" width="2" height="9" fill="#1050e0"/>
<rect x="401" y="421" width="2" height="10" fill="#f01010"/>
<rect x="404" y="425" width="2" height="6" fill="#1050e0"/>
<rect x="406" y="421" width="2" height="10" fill="#f01010"/>
<rect x="408" y="423" width="2" height="8" fill="#1050e0"/>
<rect x="410" y="421" width="2" height="10" fill="#f01010"/>
<rect x="412" y="410" width="2" height="21" fill="#f01010"/>
<rect x="414" y="415" width="2" height="16" fill="#1050e0"/>
<rect x="416" y="425" width="2" height="6" fill="#1050e0"/>
<rect x="418" y="420" width="2" height="11" fill="#f01010"/>
<rect x="420" y="425" width="2" height="6" fill="#1050e0"/>
<rect x="422" y="423" width="2" height="8" fill="#f01010"/>
<rect x="424" y="424" width="2" height="7" fill="#1050e0"/>
<rect x="426" y="424" width="2" height="7" fill="#1050e0"/>
<rect x="428" y="421" width="2" height="10" fill="#f01010"/>
<rect x="430" y="419" width="2" height="12" fill="#f01010"/>
<rect x="432" y="423" width="2" height="8" fill="#1050e0"/>
<rect x="434" y="420" width="2" height="11" fill="#f01010"/>
<rect x="436" y="422" width="2" height="9" fill="#1050e0"/>
<rect x="438" y="419" width="2" height="12" fill="#f01010"/>
<rect x="440" y="420" width="2" height="11" fill="#1050e0"/>
<rect x="442" y="406" width="2" height="25" fill="#f01010"/>
<rect x="444" y="414" width="2" height="17" fill="#f01010"/>
<rect x="446" y="421" width="2" height="10" fill="#1050e0"/>
<rect x="448" y="415" width="2" height="16" fill="#f01010"/>
<rect x="450" y="406" width="2" height="25" fill="#f01010"/>
<rect x="452" y="417" width="2" height="14" fill="#1050e0"/>
<rect x="454" y="415" width="2" height="16" fill="#f01010"/>
<rect x="456" y="414" width="2" height="17" fill="#f01010"/>
<rect x="458" y="419" width="2" height="12" fill="#1050e0"/>
<rect x="460" y="414" width="2" height="17" fill="#f01010"/>
<rect x="462" y="422" width="2" height="9" fill="#1050e0"/>
<rect x="465" y="422" width="2" height="9" fill="#1050e0"/>
<rect x="467" y="420" width="2" height="11" fill="#f01010"/>
<rect x="469" y="422" width="2" height="9" fill="#1050e0"/>
<rect x="471" y="421" width="2" height="10" fill="#f01010"/>
<rect x="473" y="421" width="2" height="10" fill="#f01010"/>
<rect x="475" y="418" width="2" height="13" fill="#f01010"/>
<rect x="477" y="415" width="2" height="16" fill="#f01010"/>
<rect x="479" y="417" width="2" height="14" fill="#1050e0"/>
<rect x="481" y="413" width="2" height="18" fill="#f01010"/>
<rect x="483" y="391" width="2" height="40" fill="#f01010"/>
<rect x="485" y="420" width="2" height="11" fill="#1050e0"/>
<rect x="487" y="411" width="2" height="20" fill="#1050e0"/>
<rect x="489" y="423" width="2" height="8" fill="#1050e0"/>
<rect x="491" y="425" width="2" height="6" fill="#1050e0"/>
<rect x="493" y="424" width="2" height="7" fill="#f01010"/>
<rect x="495" y="421" width="2" height="10" fill="#f01010"/>
<rect x="497" y="426" width="2" height="5" fill="#1050e0"/>
<rect x="499" y="425" width="2" height="6" fill="#f01010"/>
<rect x="501" y="424" width="2" height="7" fill="#f01010"/>
<rect x="503" y="423" width="2" height="8" fill="#f01010"/>
<rect x="505" y="426" width="2" height="5" fill="#1050e0"/>
<rect x="507" y="426" width="2" height="5" fill="#f01010"/>
<rect x="509" y="426" width="2" height="5" fill="#1050e0"/>
<rect x="511" y="425" width="2" height="6" fill="#f01010"/>
<rect x="513" y="425" width="2" height="6" fill="#f01010"/>
<rect x="515" y="423" width="2" height="8" fill="#f01010"/>
<rect x="517" y="417" width="2" height="14" fill="#f01010"/>
<rect x="519" y="423" width="2" height="8" fill="#1050e0"/>
<rect x="521" y="427" width="2" height="4" fill="#1050e0"/>
<rect x="523" y="427" width="2" height="4" fill="#f01010"/>
<rect x="526" y="412" width="2" height="19" fill="#f01010"/>
<rect x="528" y="414" width="2" height="17" fill="#1050e0"/>
<rect x="530" y="374" width="2" height="57" fill="#f01010"/>
<rect x="532" y="405" width="2" height="26" fill="#1050e0"/>
<rect x="534" y="315" width="2" height="116" fill="#f01010"/>
<rect x="536" y="373" width="2" height="58" fill="#1050e0"/>
<rect x="538" y="396" width="2" height="35" fill="#1050e0"/>
<rect x="540" y="383" width="2" height="48" fill="#f01010"/>
<rect x="542" y="358" width="2" height="73" fill="#f01010"/>
<rect x="544" y="408" width="2" height="23" fill="#1050e0"/>
<rect x="546" y="419" width="2" height="12" fill="#1050e0"/>
<rect x="548" y="421" width="2" height="10" fill="#1050e0"/>
<rect x="550" y="420" width="2" height="11" fill="#f01010"/>
<rect x="552" y="418" width="2" height="13" fill="#f01010"/>
<rect x="554" y="415" width="2" height="16" fill="#f01010"/>
<rect x="556" y="414" width="2" height="17" fill="#f01010"/>
<rect x="558" y="418" width="2" height="13" fill="#1050e0"/>
<rect x="560" y="416" width="2" height="15" fill="#f01010"/>
<rect x="562" y="419" width="2" height="12" fill="#1050e0"/>
<rect x="564" y="416" width="2" height="15" fill="#f01010"/>
<rect x="566" y="420" width="2" height="11" fill="#1050e0"/>
<rect x="568" y="424" width="2" height="7" fill="#1050e0"/>
<rect x="570" y="415" width="2" height="16" fill="#f01010"/>
<rect x="572" y="423" width="2" height="8" fill="#1050e0"/>
<rect x="574" y="418" width="2" height="13" fill="#f01010"/>
<rect x="576" y="420" width="2" height="11" fill="#1050e0"/>
<rect x="578" y="422" width="2" height="9" fill="#1050e0"/>
<rect x="580" y="424" width="2" height="7" fill="#1050e0"/>
<rect x="582" y="423" width="2" height="8" fill="#f01010"/>
<rect x="584" y="420" width="2" height="11" fill="#f01010"/>
<rect x="587" y="412" width="2" height="19" fill="#f01010"/>
<rect x="589" y="424" width="2" height="7" fill="#1050e0"/>
<rect x="591" y="424" width="2" height="7" fill="#1050e0"/>
<rect x="593" y="421" width="2" height="10" fill="#f01010"/>
<rect x="595" y="420" width="2" height="11" fill="#f01010"/>
<rect x="597" y="422" width="2" height="9" fill="#1050e0"/>
<rect x="599" y="423" width="2" height="8" fill="#1050e0"/>
<rect x="601" y="420" width="2" height="11" fill="#f01010"/>
<rect x="603" y="424" width="2" height="7" fill="#1050e0"/>
<rect x="605" y="421" width="2" height="10" fill="#f01010"/>
<rect x="607" y="421" width="2" height="10" fill="#f01010"/>
<rect x="609" y="421" width="2" height="10" fill="#f01010"/>
<rect x="611" y="420" width="2" height="11" fill="#f01010"/>
<rect x="613" y="418" width="2" height="13" fill="#f01010"/>
<rect x="615" y="421" width="2" height="10" fill="#1050e0"/>
</g>
<g>
<polyline points="8.0,424.5 10.1,424.5 12.1,424.5 14.1,424.5 16.2,424.5 18.2,424.5 20.2,424.5 22.3,424.5 24.3,424.5 26.3,424.5 28.4,424.6 30.4,424.6 32.4,424.6 34.5,424.6 36.5,424.6 38.5,424.6 40.6,424.6 42.6,424.6 44.6,424.6 46.7,424.6 48.7,424.6 50.7,424.6 52.8,424.6 54.8,424.6 56.8,424.6 58.9,424.2 60.9,424.3 62.9,424.2 65.0,424.2 67.0,424.2 69.0,424.2 71.1,424.2 73.1,424.2 75.1,424.2 77.2,424.2 79.2,424.2 81.2,424.2 83.3,424.2 85.3,424.2 87.3,424.2 89.4,424.2 91.4,424.0 93.4,424.0 95.5,424.0 97.5,424.0 99.5,424.0 101.6,424.0 103.6,423.9 105.6,423.9 107.7,423.9 109.7,423.9 111.7,423.9 113.8,423.8 115.8,423.8 117.8,423.7 119.9,423.7 121.9,423.5 123.9,423.4 126.0,423.3 128.0,423.3 130.0,422.5 132.1,422.3 134.1,422.1 136.1,422.0 138.2,421.9 140.2,421.7 142.2,421.6 144.3,421.5 146.3,421.5 148.3,421.4 150.4,421.3 152.4,421.2 154.4,421.2 156.5,421.1 158.5,421.0 160.5,420.9 162.6,420.8 164.6,420.8 166.6,420.7 168.7,420.7 170.7,420.5 172.7,420.4 174.8,420.4 176.8,420.3 178.8,420.2 180.9,419.6 182.9,419.2 184.9,419.1 187.0,418.4 189.0,417.9 191.0,417.8 193.1,417.7 195.1,417.6 197.1,417.5 199.2,417.5 201.2,417.4 203.2,417.3 205.3,417.3 207.3,417.3 209.3,417.2 211.4,417.2 213.4,417.1 215.4,417.1 217.5,417.0 219.5,416.5 221.5,416.4 223.6,416.3 225.6,416.3 227.6,416.2 229.7,416.1 231.7,416.0 233.7,415.7 235.8,415.7 237.8,415.5 239.8,415.4 241.9,415.0 243.9,414.9 245.9,414.8 248.0,414.5 250.0,414.2 252.0,414.2 254.1,414.1 256.1,414.0 258.1,414.0 260.2,413.9 262.2,413.8 264.2,413.8 266.3,413.8 268.3,413.7 270.3,413.7 272.4,413.6 274.4,413.5 276.4,413.5 278.5,413.5 280.5,413.4 282.5,413.4 284.6,413.3 286.6,413.3 288.6,413.3 290.7,413.2 292.7,413.2 294.7,413.2 296.8,413.2 298.8,413.3 300.8,413.2 302.9,413.6 304.9,413.4 306.9,413.4 309.0,413.4 311.0,413.4 313.0,413.4 315.1,413.4 317.1,413.2 319.1,413.2 321.2,413.2 323.2,413.2 325.2,413.2 327.3,413.2 329.3,413.1 331.3,413.1 333.4,413.1 335.4,413.2 337.4,413.2 339.5,413.1 341.5,413.0 343.5,413.0 345.6,412.9 347.6,413.0 349.6,412.9 351.7,412.7 353.7,412.7 355.7,412.6 357.8,412.6 359.8,412.6 361.8,412.6 363.9,412.6 365.9,412.8 367.9,412.9 370.0,413.0 372.0,412.9 374.0,413.5 376.1,413.7 378.1,413.8 380.1,413.9 382.2,414.0 384.2,414.2 386.2,414.1 388.3,414.1 390.3,414.1 392.3,414.1 394.4,414.1 396.4,414.2 398.4,414.2 400.5,414.3 402.5,414.3 404.5,414.4 406.6,414.4 408.6,414.5 410.6,414.5 412.7,414.4 414.7,414.6 416.7,414.6 418.8,414.6 420.8,414.7 422.8,414.8 424.9,415.4 426.9,415.8 428.9,415.9 431.0,416.6 433.0,417.0 435.0,417.1 437.1,417.2 439.1,417.2 441.1,417.2 443.2,417.2 445.2,417.1 447.2,417.1 449.3,417.1 451.3,417.0 453.3,416.9 455.4,416.9 457.4,416.9 459.4,416.9 461.5,416.9 463.5,417.4 465.5,417.5 467.6,417.5 469.6,417.5 471.6,417.6 473.7,417.6 475.7,417.7 477.7,417.9 479.8,417.9 481.8,418.0 483.8,417.8 485.9,418.1 487.9,418.1 489.9,418.3 492.0,418.5 494.0,418.8 496.0,418.8 498.1,418.9 500.1,418.9 502.1,418.9 504.2,419.1 506.2,419.1 508.2,419.2 510.3,419.2 512.3,419.2 514.3,419.3 516.4,419.4 518.4,419.4 520.4,419.4 522.5,419.4 524.5,419.5 526.5,419.4 528.6,419.3 530.6,418.9 532.6,418.8 534.7,417.9 536.7,417.5 538.7,417.3 540.8,416.9 542.8,416.4 544.8,416.3 546.9,416.2 548.9,416.3 550.9,416.3 553.0,416.3 555.0,416.2 557.0,416.1 559.1,416.1 561.1,416.2 563.1,416.2 565.2,416.1 567.2,416.1 569.2,416.1 571.3,416.1 573.3,416.1 575.3,416.1 577.4,416.0 579.4,416.0 581.4,416.0 583.5,416.2 585.5,416.2 587.5,416.1 589.6,416.2 591.6,416.2 593.6,416.2 595.7,416.3 597.7,416.4 599.7,416.5 601.8,416.5 603.8,416.5 605.8,416.5 607.9,416.5 609.9,416.5 611.9,416.5 614.0,416.5 616.0,416.5" fill="none" stroke="#888888" stroke-width="1" stroke-linejoin="round" />
<polyline points="8.0,424.5 10.1,424.5 12.1,424.5 14.1,424.6 16.2,424.6 18.2,424.6 20.2,424.6 22.3,424.6 24.3,424.6 26.3,424.6 28.4,424.6 30.4,424.6 32.4,424.7 34.5,424.7 36.5,424.7 38.5,424.7 40.6,424.7 42.6,424.7 44.6,424.8 46.7,424.8 48.7,424.8 50.7,424.8 52.8,424.8 54.8,424.7 56.8,424.7 58.9,424.0 60.9,424.0 62.9,424.0 65.0,424.0 67.0,423.9 69.0,423.9 71.1,423.8 73.1,423.9 75.1,423.8 77.2,423.8 79.2,423.8 81.2,423.8 83.3,423.8 85.3,423.8 87.3,423.8 89.4,423.8 91.4,423.6 93.4,423.4 95.5,423.4 97.5,423.5 99.5,423.5 101.6,423.5 103.6,423.4 105.6,423.3 107.7,423.3 109.7,423.3 111.7,423.2 113.8,423.1 115.8,423.1 117.8,423.0 119.9,422.9 121.9,422.4 123.9,422.2 126.0,422.1 128.0,422.1 130.0,420.5 132.1,420.1 134.1,419.7 136.1,419.4 138.2,419.2 140.2,418.8 142.2,418.5 144.3,418.4 146.3,418.3 148.3,418.1 150.4,418.0 152.4,417.8 154.4,417.7 156.5,417.4 158.5,417.3 160.5,417.2 162.6,417.0 164.6,416.8 166.6,416.7 168.7,416.6 170.7,416.1 172.7,416.0 174.8,416.0 176.8,415.9 178.8,415.8 180.9,415.1 182.9,414.3 184.9,414.2 187.0,412.8 189.0,411.8 191.0,411.7 193.1,411.5 195.1,411.4 197.1,411.3 199.2,411.1 201.2,411.1 203.2,410.9 205.3,410.8 207.3,410.8 209.3,410.7 211.4,410.5 213.4,410.7 215.4,410.7 217.5,410.5 219.5,409.4 221.5,409.3 223.6,409.2 225.6,409.2 227.6,409.0 229.7,408.9 231.7,408.8 233.7,408.2 235.8,408.2 237.8,407.8 239.8,407.8 241.9,407.1 243.9,407.5 245.9,407.3 248.0,406.9 250.0,406.4 252.0,407.8 254.1,408.1 256.1,408.4 258.1,408.6 260.2,408.5 262.2,408.8 264.2,409.0 266.3,409.2 268.3,409.1 270.3,409.3 272.4,409.1 274.4,409.2 276.4,409.3 278.5,409.5 280.5,409.5 282.5,409.6 284.6,409.7 286.6,409.8 288.6,409.9 290.7,409.9 292.7,410.3 294.7,410.4 296.8,410.5 298.8,410.6 300.8,410.7 302.9,412.0 304.9,412.6 306.9,412.7 309.0,414.0 311.0,415.0 313.0,415.2 315.1,415.3 317.1,415.0 319.1,415.1 321.2,415.3 323.2,415.3 325.2,415.5 327.3,415.5 329.3,415.5 331.3,415.5 333.4,415.7 335.4,415.7 337.4,415.8 339.5,415.7 341.5,416.6 343.5,416.7 345.6,416.7 347.6,416.7 349.6,416.8 351.7,416.6 353.7,416.5 355.7,417.1 357.8,417.0 359.8,417.4 361.8,417.5 363.9,418.1 365.9,418.2 367.9,418.6 370.0,419.1 372.0,419.5 374.0,419.2 376.1,419.2 378.1,419.3 380.1,419.3 382.2,419.5 384.2,419.5 386.2,419.2 388.3,419.0 390.3,419.0 392.3,418.9 394.4,419.1 396.4,419.1 398.4,419.1 400.5,419.1 402.5,419.1 404.5,419.2 406.6,419.2 408.6,419.2 410.6,419.1 412.7,419.0 414.7,418.8 416.7,418.9 418.8,418.8 420.8,418.8 422.8,418.9 424.9,418.9 426.9,419.1 428.9,419.1 431.0,419.1 433.0,419.1 435.0,419.0 437.1,419.0 439.1,419.3 441.1,419.3 443.2,419.0 445.2,418.8 447.2,418.8 449.3,418.7 451.3,418.5 453.3,418.4 455.4,418.2 457.4,418.1 459.4,418.0 461.5,418.2 463.5,418.3 465.5,418.2 467.6,418.3 469.6,418.4 471.6,418.4 473.7,418.7 475.7,418.8 477.7,418.7 479.8,418.7 481.8,418.6 483.8,418.1 485.9,418.1 487.9,417.9 489.9,417.9 492.0,418.0 494.0,418.1 496.0,418.4 498.1,418.6 500.1,418.6 502.1,418.6 504.2,418.7 506.2,418.8 508.2,419.1 510.3,419.3 512.3,419.5 514.3,419.6 516.4,419.6 518.4,419.6 520.4,419.7 522.5,419.7 524.5,419.8 526.5,419.6 528.6,419.5 530.6,418.7 532.6,418.4 534.7,416.8 536.7,416.1 538.7,415.6 540.8,415.0 542.8,413.9 544.8,413.6 546.9,413.6 548.9,413.5 550.9,413.5 553.0,413.5 555.0,413.3 557.0,413.2 559.1,413.2 561.1,413.1 563.1,413.1 565.2,413.3 567.2,413.4 569.2,413.4 571.3,413.4 573.3,413.7 575.3,413.7 577.4,413.8 579.4,414.0 581.4,414.0 583.5,414.2 585.5,414.1 587.5,414.0 589.6,414.0 591.6,414.0 593.6,414.0 595.7,414.0 597.7,414.1 599.7,414.2 601.8,414.3 603.8,414.4 605.8,415.0 607.9,415.0 609.9,415.1 611.9,415.1 614.0,415.0 616.0,414.9" fill="none" stroke="#30a030" stroke-width="1" stroke-linejoin="round" />
<polyline points="8.0,424.6 10.1,424.6 12.1,424.6 14.1,424.7 16.2,424.7 18.2,424.7 20.2,424.8 22.3,424.7 24.3,424.8 26.3,424.8 28.4,424.9 30.4,424.8 32.4,425.0 34.5,425.1 36.5,425.2 38.5,425.0 40.6,425.1 42.6,425.2 44.6,425.3 46.7,425.3 48.7,425.3 50.7,425.3 52.8,425.3 54.8,424.8 56.8,424.8 58.9,422.8 60.9,422.8 62.9,422.7 65.0,422.7 67.0,422.5 69.0,422.2 71.1,422.2 73.1,422.1 75.1,421.8 77.2,421.7 79.2,421.9 81.2,421.9 83.3,421.8 85.3,421.6 87.3,421.6 89.4,421.6 91.4,420.9 93.4,420.4 95.5,420.8 97.5,420.9 99.5,422.9 101.6,422.9 103.6,422.7 105.6,422.6 107.7,422.7 109.7,422.7 111.7,422.6 113.8,422.4 115.8,422.3 117.8,422.0 119.9,421.7 121.9,420.3 123.9,419.7 126.0,419.3 128.0,419.3 130.0,414.5 132.1,414.1 134.1,413.5 136.1,412.6 138.2,412.0 140.2,410.7 142.2,409.9 144.3,409.8 146.3,409.7 148.3,409.2 150.4,409.0 152.4,408.6 154.4,408.5 156.5,408.2 158.5,408.1 160.5,407.9 162.6,408.7 164.6,408.9 166.6,409.1 168.7,409.0 170.7,412.3 172.7,413.1 174.8,414.0 176.8,414.3 178.8,414.4 180.9,411.7 182.9,410.1 184.9,410.1 187.0,406.0 189.0,403.5 191.0,403.3 193.1,403.4 195.1,403.4 197.1,403.3 199.2,403.2 201.2,403.6 203.2,403.6 205.3,403.8 207.3,403.9 209.3,403.8 211.4,404.8 213.4,404.8 215.4,404.5 217.5,404.5 219.5,401.9 221.5,405.6 223.6,407.7 225.6,407.7 227.6,411.3 229.7,413.9 231.7,414.1 233.7,412.6 235.8,412.8 237.8,412.1 239.8,412.1 241.9,409.9 243.9,410.1 245.9,409.2 248.0,407.7 250.0,406.4 252.0,406.5 254.1,406.4 256.1,406.6 258.1,407.1 260.2,409.1 262.2,409.2 264.2,409.4 266.3,409.8 268.3,410.1 270.3,410.4 272.4,410.0 274.4,411.6 276.4,411.8 278.5,413.1 280.5,413.3 282.5,415.2 284.6,415.5 286.6,416.5 288.6,418.1 290.7,419.5 292.7,419.8 294.7,420.0 296.8,420.3 298.8,420.3 300.8,421.0 302.9,421.2 304.9,420.7 306.9,420.6 309.0,420.7 311.0,420.6 313.0,421.5 315.1,421.6 317.1,420.4 319.1,420.3 321.2,420.6 323.2,420.8 325.2,420.9 327.3,420.9 329.3,420.6 331.3,420.8 333.4,420.7 335.4,420.6 337.4,420.6 339.5,419.7 341.5,419.6 343.5,419.6 345.6,419.9 347.6,419.7 349.6,419.5 351.7,418.8 353.7,418.1 355.7,418.1 357.8,418.8 359.8,418.7 361.8,418.5 363.9,418.4 365.9,418.3 367.9,418.3 370.0,418.6 372.0,418.2 374.0,417.2 376.1,417.0 378.1,416.9 380.1,417.8 382.2,417.8 384.2,417.8 386.2,417.1 388.3,416.8 390.3,416.8 392.3,417.4 394.4,417.9 396.4,417.8 398.4,418.0 400.5,418.1 402.5,418.2 404.5,418.4 406.6,418.4 408.6,418.4 410.6,418.3 412.7,417.9 414.7,418.5 416.7,419.0 418.8,418.9 420.8,419.1 422.8,419.2 424.9,419.3 426.9,420.3 428.9,420.7 431.0,420.9 433.0,421.1 435.0,421.1 437.1,421.2 439.1,421.2 441.1,421.1 443.2,420.3 445.2,419.7 447.2,419.8 449.3,419.4 451.3,418.6 453.3,418.9 455.4,418.9 457.4,418.4 459.4,418.3 461.5,417.8 463.5,417.7 465.5,417.7 467.6,417.5 469.6,417.5 471.6,417.6 473.7,417.5 475.7,417.4 477.7,417.1 479.8,417.0 481.8,416.7 483.8,415.9 485.9,416.2 487.9,415.7 489.9,416.1 492.0,417.1 494.0,417.4 496.0,417.7 498.1,418.3 500.1,418.6 502.1,419.1 504.2,419.1 506.2,419.3 508.2,419.6 510.3,419.8 512.3,420.0 514.3,420.1 516.4,420.4 518.4,420.4 520.4,420.8 522.5,421.5 524.5,423.3 526.5,422.9 528.6,423.0 530.6,420.6 532.6,419.6 534.7,414.1 536.7,411.7 538.7,410.2 540.8,408.1 542.8,404.8 544.8,404.1 546.9,403.7 548.9,403.5 550.9,403.2 553.0,402.8 555.0,402.3 557.0,401.9 559.1,402.0 561.1,401.7 563.1,401.3 565.2,400.7 567.2,401.1 569.2,401.6 571.3,403.7 573.3,404.6 575.3,409.7 577.4,412.0 579.4,413.3 581.4,415.4 583.5,418.6 585.5,419.2 587.5,418.8 589.6,419.0 591.6,419.2 593.6,419.3 595.7,419.6 597.7,419.9 599.7,420.2 601.8,420.3 603.8,420.6 605.8,420.9 607.9,420.9 609.9,420.8 611.9,421.0 614.0,420.8 616.0,420.9" fill="none" stroke="#f0b020" stroke-width="1" stroke-linejoin="round" />
<polyline points="8.0,424.7 10.1,424.7 12.1,425.0 14.1,425.2 16.2,425.3 18.2,424.9 20.2,425.3 22.3,425.0 24.3,424.8 26.3,424.9 28.4,425.3 30.4,424.7 32.4,425.3 34.5,425.8 36.5,426.2 38.5,425.0 40.6,425.6 42.6,425.5 44.6,425.6 46.7,425.0 48.7,425.8 50.7,425.5 52.8,425.2 54.8,423.1 56.8,423.2 58.9,415.1 60.9,415.3 62.9,414.6 65.0,416.2 67.0,415.5 69.0,423.0 71.1,422.6 73.1,423.2 75.1,422.4 77.2,423.1 79.2,423.8 81.2,424.3 83.3,424.2 85.3,424.7 87.3,424.5 89.4,424.7 91.4,421.3 93.4,419.8 95.5,420.0 97.5,420.5 99.5,420.2 101.6,423.5 103.6,423.5 105.6,423.3 107.7,422.9 109.7,422.3 111.7,421.4 113.8,422.0 115.8,421.2 117.8,420.3 119.9,419.7 121.9,415.0 123.9,413.5 126.0,412.8 128.0,413.5 130.0,395.9 132.1,396.6 134.1,395.0 136.1,393.0 138.2,391.5 140.2,405.2 142.2,406.5 144.3,408.8 146.3,411.9 148.3,411.4 150.4,415.3 152.4,416.2 154.4,416.6 156.5,415.2 158.5,415.9 160.5,415.1 162.6,415.6 164.6,415.1 166.6,416.3 168.7,417.3 170.7,413.6 172.7,414.2 174.8,415.3 176.8,414.0 178.8,412.9 180.9,402.7 182.9,394.4 184.9,393.2 187.0,378.4 189.0,368.0 191.0,382.0 193.1,389.5 195.1,389.9 197.1,404.4 199.2,414.6 201.2,416.1 203.2,416.2 205.3,416.8 207.3,418.7 209.3,419.5 211.4,418.2 213.4,419.3 215.4,418.3 217.5,416.6 219.5,405.5 221.5,406.2 223.6,405.7 225.6,405.8 227.6,405.7 229.7,416.1 231.7,415.7 233.7,409.2 235.8,410.3 237.8,407.3 239.8,407.1 241.9,399.7 243.9,406.2 245.9,402.3 248.0,401.4 250.0,396.7 252.0,404.5 254.1,404.6 256.1,408.0 258.1,413.9 260.2,416.4 262.2,417.0 264.2,417.6 266.3,418.6 268.3,417.8 270.3,421.6 272.4,418.7 274.4,418.2 276.4,418.4 278.5,419.1 280.5,418.4 282.5,420.7 284.6,421.5 286.6,421.2 288.6,421.6 290.7,421.6 292.7,422.7 294.7,422.6 296.8,422.9 298.8,422.5 300.8,422.7 302.9,422.8 304.9,420.4 306.9,420.0 309.0,419.6 311.0,419.9 313.0,419.8 315.1,421.8 317.1,417.6 319.1,417.6 321.2,418.4 323.2,418.1 325.2,418.6 327.3,423.1 329.3,422.6 331.3,422.1 333.4,422.3 335.4,421.6 337.4,421.8 339.5,419.1 341.5,418.1 343.5,418.2 345.6,417.7 347.6,416.3 349.6,418.8 351.7,416.5 353.7,413.8 355.7,414.5 357.8,413.9 359.8,414.4 361.8,417.3 363.9,419.3 365.9,419.5 367.9,421.1 370.0,421.9 372.0,421.1 374.0,417.6 376.1,416.5 378.1,416.1 380.1,415.9 382.2,416.4 384.2,420.4 386.2,417.8 388.3,416.0 390.3,415.0 392.3,414.7 394.4,414.2 396.4,417.3 398.4,418.6 400.5,419.8 402.5,420.4 404.5,421.5 406.6,422.0 408.6,422.7 410.6,422.5 412.7,420.2 414.7,418.1 416.7,418.9 418.8,418.3 420.8,419.1 422.8,421.7 424.9,423.4 426.9,423.1 428.9,423.3 431.0,422.2 433.0,422.3 435.0,421.4 437.1,421.0 439.1,420.5 441.1,420.5 443.2,417.2 445.2,416.1 447.2,416.0 449.3,415.3 451.3,412.5 453.3,414.6 455.4,414.8 457.4,413.4 459.4,414.2 461.5,415.9 463.5,416.9 465.5,418.3 467.6,419.5 469.6,420.2 471.6,421.6 473.7,421.5 475.7,420.6 477.7,419.6 479.8,418.4 481.8,416.8 483.8,410.7 485.9,411.2 487.9,410.3 489.9,411.5 492.0,413.9 494.0,420.6 496.0,420.8 498.1,423.8 500.1,424.2 502.1,424.0 504.2,423.7 506.2,424.7 508.2,424.7 510.3,424.9 512.3,425.1 514.3,425.5 516.4,424.8 518.4,423.0 520.4,422.5 522.5,422.8 524.5,423.2 526.5,421.1 528.6,420.5 530.6,410.8 532.6,406.4 534.7,384.0 536.7,376.3 538.7,372.7 540.8,374.4 542.8,365.0 544.8,383.6 546.9,392.7 548.9,397.7 550.9,405.1 553.0,417.1 555.0,418.5 557.0,417.6 559.1,417.1 561.1,416.3 563.1,416.5 565.2,416.8 567.2,418.0 569.2,419.1 571.3,418.9 573.3,419.7 575.3,420.0 577.4,419.9 579.4,419.5 581.4,421.2 583.5,421.1 585.5,421.6 587.5,419.9 589.6,420.2 591.6,420.3 593.6,419.9 595.7,420.0 597.7,422.0 599.7,421.8 601.8,421.0 603.8,421.8 605.8,422.0 607.9,421.9 609.9,421.6 611.9,421.5 614.0,420.2 616.0,420.2" fill="none" stroke="#e040c0" stroke-width="1" stroke-linejoin="round" />
</g>
<g shape-rendering="crispEdges">
<line x1="643.5" y1="43" x2="643.5" y2="432" stroke="#909090"/>
<line x1="7" y1="303.5" x2="697" y2="303.5" stroke="#909090"/>
<line x1="7" y1="432.5" x2="697" y2="432.5" stroke="#a8b0b8"/>
<line x1="644" y1="60.5" x2="649" y2="60.5" stroke="#808080"/>
<line x1="644" y1="69.0" x2="646" y2="69.0" stroke="#808080"/>
<line x1="644" y1="77.5" x2="649" y2="77.5" stroke="#808080"/>
<line x1="644" y1="86.0" x2="646" y2="86.0" stroke="#808080"/>
<line x1="644" y1="94.5" x2="649" y2="94.5" stroke="#808080"/>
<line x1="644" y1="103.0" x2="646" y2="103.0" stroke="#808080"/>
<line x1="644" y1="111.5" x2="649" y2="111.5" stroke="#808080"/>
<line x1="644" y1="120.0" x2="646" y2="120.0" stroke="#808080"/>
<line x1="644" y1="128.5" x2="649" y2="128.5" stroke="#808080"/>
<line x1="644" y1="137.0" x2="646" y2="137.0" stroke="#808080"/>
<line x1="644" y1="146.5" x2="649" y2="146.5" stroke="#808080"/>
<line x1="644" y1="155.0" x2="646" y2="155.0" stroke="#808080"/>
<line x1="644" y1="163.5" x2="649" y2="163.5" stroke="#808080"/>
<line x1="644" y1="172.0" x2="646" y2="172.0" stroke="#808080"/>
<line x1="644" y1="180.5" x2="649" y2="180.5" stroke="#808080"/>
<line x1="644" y1="189.0" x2="646" y2="189.0" stroke="#808080"/>
<line x1="644" y1="197.5" x2="649" y2="197.5" stroke="#808080"/>
<line x1="644" y1="206.0" x2="646" y2="206.0" stroke="#808080"/>
<line x1="644" y1="214.5" x2="649" y2="214.5" stroke="#808080"/>
<line x1="644" y1="223.0" x2="646" y2="223.0" stroke="#808080"/>
<line x1="644" y1="231.5" x2="649" y2="231.5" stroke="#808080"/>
<line x1="644" y1="240.0" x2="646" y2="240.0" stroke="#808080"/>
<line x1="644" y1="248.5" x2="649" y2="248.5" stroke="#808080"/>
<line x1="644" y1="257.0" x2="646" y2="257.0" stroke="#808080"/>
<line x1="644" y1="265.5" x2="649" y2="265.5" stroke="#808080"/>
<line x1="644" y1="274.0" x2="646" y2="274.0" stroke="#808080"/>
<line x1="644" y1="282.5" x2="649" y2="282.5" stroke="#808080"/>
<line x1="644" y1="291.0" x2="646" y2="291.0" stroke="#808080"/>
<line x1="644" y1="299.5" x2="649" y2="299.5" stroke="#808080"/>
<line x1="644" y1="51.5" x2="646" y2="51.5" stroke="#808080"/>
<line x1="644" y1="320.5" x2="649" y2="320.5" stroke="#808080"/>
<line x1="644" y1="312.5" x2="646" y2="312.5" stroke="#808080"/>
<line x1="644" y1="336.5" x2="649" y2="336.5" stroke="#808080"/>
<line x1="644" y1="328.5" x2="646" y2="328.5" stroke="#808080"/>
<line x1="644" y1="352.5" x2="649" y2="352.5" stroke="#808080"/>
<line x1="644" y1="344.5" x2="646" y2="344.5" stroke="#808080"/>
<line x1="644" y1="368.5" x2="649" y2="368.5" stroke="#808080"/>
<line x1="644" y1="360.5" x2="646" y2="360.5" stroke="#808080"/>
<line x1="644" y1="384.5" x2="649" y2="384.5" stroke="#808080"/>
<line x1="644" y1="376.5" x2="646" y2="376.5" stroke="#808080"/>
<line x1="644" y1="399.5" x2="649" y2="399.5" stroke="#808080"/>
<line x1="644" y1="391.5" x2="646" y2="391.5" stroke="#808080"/>
<line x1="644" y1="415.5" x2="649" y2="415.5" stroke="#808080"/>
<line x1="644" y1="407.5" x2="646" y2="407.5" stroke="#808080"/>
</g>
<!-- arrows -->
<path d="M522 60.5 H530" stroke="#f02020" stroke-width="1.2"/>
<path d="M529 56 L535 60.5 L529 65 Z" fill="#f02020"/>
<path d="M115 285.5 H123" stroke="#2020d0" stroke-width="1.2"/>
<path d="M122 281 L128 285.5 L122 290 Z" fill="#2020d0"/>
</svg>

<!-- chart legend -->
<div class="a" style="left:9px;top:47px;width:5px;height:5px;background:#a8a8a8;border:1px solid #686868"></div>
<div class="a" style="left:15px;top:44px;width:75px;height:12px;background:#e0e4e0;border:1px solid #c8ccc8"></div>
<div class="lg k" style="left:19px;top:43px;color:#303030;font-size:10px">두산인프라코어</div>
<div class="a" style="left:92px;top:47px;width:5px;height:5px;background:#a8a8a8;border:1px solid #686868"></div>
<div class="lg" style="left:102px;top:43px;color:#d030a0"><span class="k" style="font-size:10px">종가 단순</span></div>
<div class="lg" style="left:147px;top:43px;color:#d030a0"><span class="sx">5</span></div>
<div class="lg" style="left:161px;top:43px;color:#2850a8"><span class="sx" style="transform:scaleX(0.85)">10</span></div>
<div class="lg" style="left:177px;top:43px;color:#f0a020"><span class="sx" style="transform:scaleX(0.85)">20</span></div>
<div class="lg" style="left:193px;top:43px;color:#30a040"><span class="sx" style="transform:scaleX(0.85)">60</span></div>
<div class="lg" style="left:211px;top:43px;color:#707070"><span class="sx" style="transform:scaleX(0.8)">120</span></div>
<svg class="a" style="left:10px;top:57px" width="14" height="14"><rect x="1.5" y="1.5" width="11" height="11" rx="1" fill="#c8c8c8" stroke="#303030" stroke-width="1.3"/><rect x="3" y="3" width="8" height="8" fill="#e8e8e8"/><path d="M3 4.5 H11 M3 9.5 H11 M5.5 3 V11 M8.5 3 V11" stroke="#a0a0a0" stroke-width="1"/><rect x="6" y="5" width="2" height="4" fill="#fff"/><rect x="9" y="5" width="1.5" height="4" fill="#fff"/><rect x="3.5" y="5" width="1.5" height="4" fill="#fff"/></svg>

<div class="lg" style="left:430px;top:53px;color:#e83030"><span class="k" style="font-size:10px">최고</span> <span class="sx" style="transform:scaleX(0.92)">10,100 (11/14)</span></div>
<div class="lg" style="left:28px;top:279px;color:#2828c8"><span class="k" style="font-size:10px">최저</span> <span class="sx" style="transform:scaleX(0.9)">3,375 (01/20)</span></div>

<!-- volume legend -->
<div class="a" style="left:9px;top:308px;width:5px;height:5px;background:#a8a8a8;border:1px solid #686868"></div>
<div class="lg k" style="left:19px;top:305px;color:#2890a0;font-size:10px">거래량</div>
<div class="lg k" style="left:55px;top:305px;color:#d030a0;font-size:10px">단순</div>
<div class="lg" style="left:78px;top:305px;color:#d030a0"><span class="sx">5</span></div>
<div class="lg" style="left:90px;top:305px;color:#f0a020"><span class="sx" style="transform:scaleX(0.85)">20</span></div>
<div class="lg" style="left:107px;top:305px;color:#30a040"><span class="sx" style="transform:scaleX(0.85)">60</span></div>
<div class="lg" style="left:124px;top:305px;color:#707070"><span class="sx" style="transform:scaleX(0.8)">120</span></div>
<div class="lg" style="left:10px;top:316px;color:#404040"><span class="sx" style="transform:scaleX(0.87)">2,199,995<span class="k" style="font-size:10px">주</span>(87,33%)</span></div>

<!-- y axis labels -->
<div class="a" style="left:644px;top:43px;line-height:11px;font-size:11px;color:#e04040;-webkit-text-stroke:0.2px #e04040"><span class="sx" style="transform:scaleX(0.93)">LC:172,89</span></div>
<div class="a" style="left:644px;top:53px;line-height:11px;font-size:11px;color:#3070d8;-webkit-text-stroke:0.2px #3070d8"><span class="sx" style="transform:scaleX(0.93)">HC:-8,81</span></div>
<div class="yl" style="top:71px"><span class="sx" style="transform:scaleX(0.86)">9,500</span></div>
<div class="yl" style="top:105px"><span class="sx" style="transform:scaleX(0.86)">8,500</span></div>
<div class="yl" style="top:122px"><span class="sx" style="transform:scaleX(0.86)">8,000</span></div>
<div class="yl" style="top:140px"><span class="sx" style="transform:scaleX(0.86)">7,500</span></div>
<div class="yl" style="top:157px"><span class="sx" style="transform:scaleX(0.86)">7,000</span></div>
<div class="yl" style="top:174px"><span class="sx" style="transform:scaleX(0.86)">6,500</span></div>
<div class="yl" style="top:191px"><span class="sx" style="transform:scaleX(0.86)">6,000</span></div>
<div class="yl" style="top:208px"><span class="sx" style="transform:scaleX(0.86)">5,500</span></div>
<div class="yl" style="top:225px"><span class="sx" style="transform:scaleX(0.86)">5,000</span></div>
<div class="yl" style="top:242px"><span class="sx" style="transform:scaleX(0.86)">4,500</span></div>
<div class="yl" style="top:259px"><span class="sx" style="transform:scaleX(0.86)">4,000</span></div>
<div class="yl" style="top:276px"><span class="sx" style="transform:scaleX(0.86)">3,500</span></div>
<div class="yl" style="top:314px"><span class="sx" style="transform:scaleX(0.86)">35,000K</span></div>
<div class="yl" style="top:330px"><span class="sx" style="transform:scaleX(0.86)">30,000K</span></div>
<div class="yl" style="top:346px"><span class="sx" style="transform:scaleX(0.86)">25,000K</span></div>
<div class="yl" style="top:362px"><span class="sx" style="transform:scaleX(0.86)">20,000K</span></div>
<div class="yl" style="top:378px"><span class="sx" style="transform:scaleX(0.86)">15,000K</span></div>
<div class="yl" style="top:393px"><span class="sx" style="transform:scaleX(0.86)">10,000K</span></div>
<div class="yl" style="top:409px"><span class="sx" style="transform:scaleX(0.86)">5,000K</span></div>
<div class="a" style="left:647px;top:81px;width:49px;height:11px;background:#e81010;color:#fff;line-height:11px;font-size:11px;padding-left:2px;-webkit-text-stroke:0.2px #fff"><span class="sx" style="transform:scaleX(0.86)">9,210</span></div>
<div class="a" style="left:650px;top:91px;line-height:11px;font-size:11px;color:#e04040;-webkit-text-stroke:0.2px #e04040"><span class="sx" style="transform:scaleX(0.8)">0,44%</span></div>
<div class="a" style="left:689px;top:306px;width:6px;height:6px;background:#404040"><div class="a" style="left:1px;top:2px;width:4px;height:2px;background:#909090"></div></div>
<div class="a" style="left:647px;top:411px;width:49px;height:11px;background:#1a50c8;color:#fff;line-height:11px;font-size:11px;padding-left:2px;-webkit-text-stroke:0.2px #fff"><span class="sx" style="transform:scaleX(0.86)">2,200K</span></div>
<div class="a" style="left:650px;top:421px;line-height:11px;font-size:11px;color:#3070e0;-webkit-text-stroke:0.2px #3070e0"><span class="sx" style="transform:scaleX(0.8)">87,33%</span></div>

<!-- x axis -->
<div class="xs" style="left:59px"></div>
<div class="xs" style="left:102px"></div>
<div class="xs" style="left:143px"></div>
<div class="xs" style="left:179px"></div>
<div class="xs" style="left:224px"></div>
<div class="xs" style="left:265px"></div>
<div class="xs" style="left:305px"></div>
<div class="xs" style="left:349px"></div>
<div class="xs" style="left:391px"></div>
<div class="xs" style="left:436px"></div>
<div class="xs" style="left:475px"></div>
<div class="xs" style="left:516px"></div>
<div class="xs" style="left:560px"></div>
<div class="xs" style="left:603px"></div>
<div class="xs" style="left:643px"></div>
<div class="xl" style="left:8px"><span>2015/10</span></div>
<div class="xl" style="left:61px"><span>12</span></div>
<div class="xl" style="left:103px"><span>2016/01</span></div>
<div class="xl" style="left:145px"><span>02</span></div>
<div class="xl" style="left:181px"><span>03</span></div>
<div class="xl" style="left:226px"><span>04</span></div>
<div class="xl" style="left:267px"><span>05</span></div>
<div class="xl" style="left:307px"><span>06</span></div>
<div class="xl" style="left:351px"><span>07</span></div>
<div class="xl" style="left:393px"><span>08</span></div>
<div class="xl" style="left:438px"><span>09</span></div>
<div class="xl" style="left:477px"><span>10</span></div>
<div class="xl" style="left:518px"><span>11</span></div>
<div class="xl" style="left:562px"><span>12</span></div>
<div class="xl" style="left:604px"><span>2017/01</span></div>
<div class="xl" style="left:650px"><span>01/10</span></div>
<div class="a" style="left:0;top:448px;width:700px;height:3px;background:#e4e4e4"></div>
<div class="a" style="left:7px;top:448px;width:690px;height:3px;background:#f6f6f6"></div>
<div class="a" style="left:1px;top:448px;width:1px;height:3px;background:#a4a4a4"></div>
<div class="a" style="left:19px;top:448px;width:1px;height:3px;background:#404040"></div>
<div class="a" style="left:589px;top:450px;width:1px;height:1px;background:#606060"></div>
<div class="a" style="left:607px;top:450px;width:2px;height:1px;background:#606060"></div>
<div class="a" style="left:619px;top:450px;width:4px;height:1px;background:#909090"></div>
<div class="a" style="left:631px;top:450px;width:9px;height:1px;background:#808080"></div>
<div class="a" style="left:645px;top:450px;width:5px;height:1px;background:#808080"></div>
</body></html>
